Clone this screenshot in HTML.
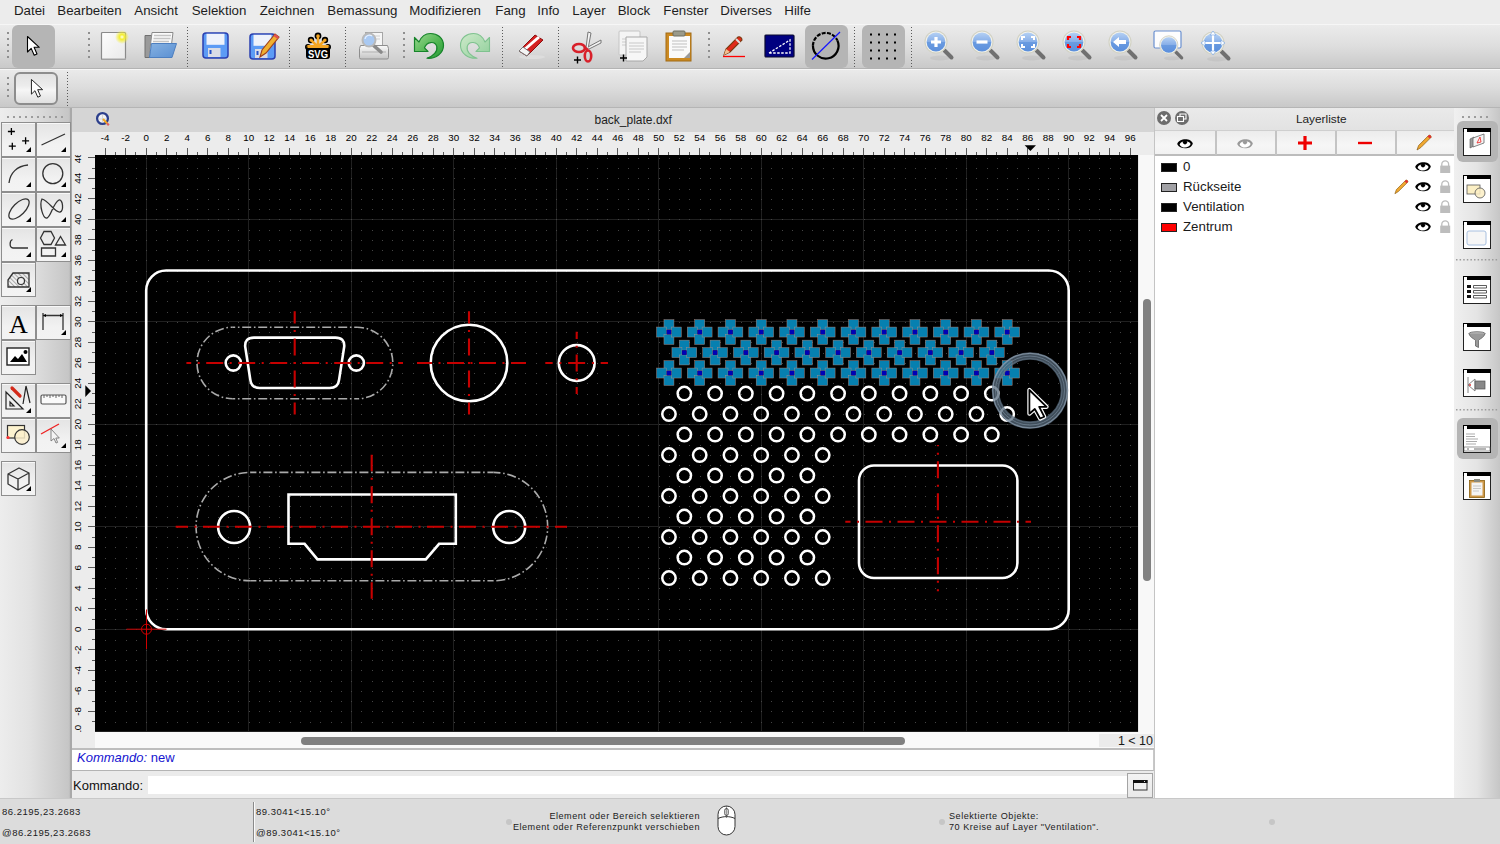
<!DOCTYPE html><html><head><meta charset="utf-8"><title>LibreCAD</title><style>
*{box-sizing:border-box}
body{margin:0;width:1500px;height:844px;position:relative;overflow:hidden;background:#ececec;font-family:"Liberation Sans",sans-serif;color:#222}
.a{position:absolute}
.mn{position:absolute;top:3px;font-size:13.3px;color:#1d1d1d;white-space:nowrap;line-height:16px}
.dsep{position:absolute;width:1px;background:repeating-linear-gradient(#5a5a5a 0 1.2px,transparent 1.2px 3px)}
.hdl{position:absolute;width:2px;background:repeating-linear-gradient(#8f8f8f 0 2px,transparent 2px 6px)}
.lb{position:absolute;background:linear-gradient(#e4e4e4,#f2f2f2 65%,#f3f3f3);border:1px solid #8e8e8e;box-shadow:inset 0 1px 0 #f8f8f8}
.tri{position:absolute;width:0;height:0;border-left:5px solid transparent;border-bottom:5px solid #000}
svg{position:absolute;overflow:visible}
.st{font-size:9.5px;letter-spacing:.5px;color:#1a1a1a;white-space:nowrap;line-height:11px}
.rt{font-size:9.8px;fill:#000;font-family:"Liberation Sans",sans-serif}
</style></head><body>
<div class="a" style="left:0;top:0;width:1500px;height:24px;background:#ececec"></div>
<span class="mn" style="left:14px">Datei</span>
<span class="mn" style="left:57.3px">Bearbeiten</span>
<span class="mn" style="left:134.3px">Ansicht</span>
<span class="mn" style="left:191.7px">Selektion</span>
<span class="mn" style="left:259.7px">Zeichnen</span>
<span class="mn" style="left:327.3px">Bemassung</span>
<span class="mn" style="left:409.3px">Modifizieren</span>
<span class="mn" style="left:495.3px">Fang</span>
<span class="mn" style="left:537.3px">Info</span>
<span class="mn" style="left:572.3px">Layer</span>
<span class="mn" style="left:617.7px">Block</span>
<span class="mn" style="left:663.3px">Fenster</span>
<span class="mn" style="left:720.3px">Diverses</span>
<span class="mn" style="left:784.3px">Hilfe</span>
<div class="a" style="left:0;top:24px;width:1500px;height:45px;background:linear-gradient(#f6f6f6 0 1px,#ebebeb 1px,#dedede 50%,#c9c9c9);border-bottom:1px solid #b3b3b3"></div>
<div class="a" style="left:0;top:69px;width:1500px;height:39px;background:linear-gradient(#f6f6f6 0 1px,#eaeaea 1px,#dcdcdc 50%,#c8c8c8);border-bottom:1px solid #b5b5b5"></div>
<div class="hdl" style="left:7px;top:32px;height:26px"></div>
<div class="a" style="left:12px;top:25px;width:43px;height:43px;border-radius:6px;background:#b5b5b5"></div>
<svg style="left:26px;top:35px" width="16" height="22"><path transform="scale(1.0)" d="M1.5 1.5 L1.5 17 L5.2 13.4 L8.2 20.2 L11 19 L8.1 12.3 L13.3 12.3 Z" fill="#fff" stroke="#000" stroke-width="1.1" stroke-linejoin="round"/></svg>
<div class="hdl" style="left:88px;top:32px;height:26px"></div>
<div class="dsep" style="left:187px;top:26.5px;height:41px"></div>
<div class="dsep" style="left:289px;top:26.5px;height:41px"></div>
<div class="dsep" style="left:345px;top:26.5px;height:41px"></div>
<div class="hdl" style="left:403px;top:32px;height:26px"></div>
<div class="dsep" style="left:502px;top:26.5px;height:41px"></div>
<div class="dsep" style="left:558px;top:26.5px;height:41px"></div>
<div class="hdl" style="left:708px;top:32px;height:26px"></div>
<div class="dsep" style="left:854px;top:26.5px;height:41px"></div>
<div class="dsep" style="left:911px;top:26.5px;height:41px"></div>
<svg style="left:100px;top:30px" width="30" height="32"><defs><radialGradient id="glow"><stop offset="0" stop-color="#fffff0"/><stop offset=".35" stop-color="#f4ee30"/><stop offset="1" stop-color="#f4ee30" stop-opacity="0"/></radialGradient><linearGradient id="pg" x1="0" y1="0" x2="1" y2="1"><stop offset="0" stop-color="#fdfdfd"/><stop offset="1" stop-color="#e9e9e9"/></linearGradient></defs>
<rect x="1.5" y="2.5" width="24" height="27" rx="1" fill="url(#pg)" stroke="#8a8a8a" stroke-width="1.2"/><rect x="2" y="28" width="24" height="2" fill="#b0b0b0" opacity=".6"/>
<circle cx="22" cy="7" r="7" fill="url(#glow)"/></svg>
<svg style="left:143px;top:31px" width="34" height="30"><defs><linearGradient id="fg" x1="0" y1="0" x2="1" y2="1"><stop offset="0" stop-color="#86b2e2"/><stop offset="1" stop-color="#5a8fd2"/></linearGradient></defs><path d="M2 4.5 h8 l1.5 2 v20 h-9.5z" fill="#9a9a9a" stroke="#707070" stroke-width="1"/>
<path d="M9 1.5 h21 l-2.5 20 h-21z" fill="#fafafa" stroke="#8a8a8a" stroke-width="1"/><path d="M11 4.5h17M10.5 7.5h17M10 10.5h16" stroke="#c4c4c4" stroke-width="1.6"/>
<path d="M8.5 12.5 h25 l-4.5 14 h-22.5z" fill="url(#fg)" stroke="#4d7fc0" stroke-width="1"/></svg>
<svg style="left:202px;top:32px" width="28" height="28"><rect x="1" y="1" width="25" height="25" rx="3" fill="#5c9bf5" stroke="#2a3fb0" stroke-width="1.5"/>
<rect x="4.5" y="1.8" width="18" height="11" fill="#eef2fb"/><rect x="6" y="16" width="12.5" height="9" fill="#d9dce6"/><rect x="7.5" y="18" width="2" height="4" fill="#2550c8"/></svg>
<svg style="left:249px;top:32.5px" width="28" height="28"><rect x="1" y="1" width="25" height="25" rx="3" fill="#5c9bf5" stroke="#2a3fb0" stroke-width="1.5"/>
<rect x="4.5" y="1.8" width="18" height="11" fill="#eef2fb"/><rect x="6" y="16" width="12.5" height="9" fill="#d9dce6"/><rect x="7.5" y="18" width="2" height="4" fill="#2550c8"/></svg>
<svg style="left:257px;top:31px" width="22" height="28"><path d="M3 26 L5 19 L18 3 L22 6 L9 22 Z" fill="#f0b030" stroke="#a0401a" stroke-width="1.1"/><path d="M18 3 L22 6 L20.5 8 L16.5 5z" fill="#e05050"/></svg>
<svg style="left:304px;top:31px" width="30" height="30"><g fill="#f5a623" stroke="#000" stroke-width="1.6"><circle cx="14" cy="5" r="2.6"/><circle cx="7" cy="9" r="2.4"/><circle cx="21" cy="9" r="2.4"/><circle cx="4" cy="16" r="2.2"/><circle cx="24" cy="16" r="2.2"/></g>
<path d="M14 5 L14 16 M7 9 L14 16 M21 9 L14 16" stroke="#f5a623" stroke-width="2.5"/>
<rect x="2" y="15" width="24" height="13" rx="3" fill="#000"/><rect x="3.5" y="14" width="21" height="3" fill="#f5a623"/>
<text x="14" y="26.6" font-family="Liberation Sans" font-weight="bold" font-size="11" fill="#fff" text-anchor="middle" textLength="20" lengthAdjust="spacingAndGlyphs">SVG</text></svg>
<svg style="left:359px;top:31px" width="32" height="30"><defs><linearGradient id="prg" x1="0" y1="0" x2="0" y2="1"><stop offset="0" stop-color="#fafafa"/><stop offset="1" stop-color="#c4c4c4"/></linearGradient></defs>
<rect x="6.5" y="1.5" width="17" height="14" fill="#f6f6f6" stroke="#a6a6a6"/><path d="M9 5h12M9 8h12" stroke="#cfcfcf"/>
<path d="M1.5 14.5 h27 l1 3 v9 a1.5 1.5 0 0 1 -1.5 1.5 h-26 a1.5 1.5 0 0 1 -1.5 -1.5 v-9z" fill="url(#prg)" stroke="#8e8e8e" stroke-width="1"/><path d="M3 21 h24" stroke="#b0b0b0"/>
<path d="M14 14 L22 21" stroke="#8a8a8a" stroke-width="3.6" stroke-linecap="round"/><circle cx="10" cy="9" r="6.5" fill="#a9c9f2" stroke="#b9b9b9" stroke-width="2"/><path d="M6 8 a4.5 4.5 0 0 1 7 -3" stroke="#e6f0ff" stroke-width="1.2" fill="none"/></svg>
<svg style="left:413px;top:32px" width="33" height="28"><defs><linearGradient id="ug" x1="0" y1="0" x2="1" y2="1"><stop offset="0" stop-color="#9ad890"/><stop offset=".6" stop-color="#4cb44e"/><stop offset="1" stop-color="#2a9a3a"/></linearGradient></defs><path d="M1.5 5.5 L1.5 19.5 L15 19.5 L11.5 15.8 C13.5 9.5 22 8.5 23.8 14.5 C24.8 19.5 20.5 24 14 26.2 C23 27 30.5 21 30.5 13.5 C30.5 5.5 24 1.5 17.5 1.5 C12.5 1.5 8.5 4 6 10 Z" fill="url(#ug)" stroke="#17842a" stroke-width="1.2" stroke-linejoin="round"/></svg>
<svg style="left:459px;top:32px" width="33" height="28"><defs><linearGradient id="rg" x1="1" y1="0" x2="0" y2="1"><stop offset="0" stop-color="#cfeacb"/><stop offset="1" stop-color="#8fcf9a"/></linearGradient></defs><g transform="translate(32 0) scale(-1 1)"><path d="M1.5 5.5 L1.5 19.5 L15 19.5 L11.5 15.8 C13.5 9.5 22 8.5 23.8 14.5 C24.8 19.5 20.5 24 14 26.2 C23 27 30.5 21 30.5 13.5 C30.5 5.5 24 1.5 17.5 1.5 C12.5 1.5 8.5 4 6 10 Z" fill="url(#rg)" stroke="#7fc28f" stroke-width="1.1" stroke-linejoin="round"/></g></svg>
<svg style="left:516px;top:31px" width="32" height="30"><ellipse cx="16" cy="26" rx="13" ry="2" fill="#ddd"/><path d="M3 20 L19 4 L27 9 L11 25 Z" fill="#d42020" stroke="#8a1010" stroke-width="1"/><path d="M7 18 L22 5 L24 7 L9 20Z" fill="#fff"/><path d="M3 20 L7 16 L14 21 L11 25 Z" fill="#f4f4f4" stroke="#777" stroke-width="1"/></svg>
<svg style="left:571px;top:29px" width="34" height="34"><path d="M15 19 L17 3 L20 4 L17 20" fill="#f4f4f4" stroke="#777" stroke-width="1"/><path d="M17 18 L30 11 L30 14 L18 20" fill="#f4f4f4" stroke="#777" stroke-width="1"/>
<ellipse cx="8" cy="19" rx="6" ry="4" fill="none" stroke="#d8202a" stroke-width="2.6"/><ellipse cx="17" cy="27" rx="3.2" ry="5.5" fill="none" stroke="#d8202a" stroke-width="2.6"/><path d="M13 18 L17 21" stroke="#d8202a" stroke-width="2.6"/>
<path d="M3 31h7M6.5 27.5v7" stroke="#000" stroke-width="1.4"/></svg>
<svg style="left:617px;top:29px" width="34" height="34"><rect x="2" y="2" width="21" height="24" rx="1" fill="#f4f4f4" stroke="#c4c4c4"/><path d="M5 10h13M5 13h13M5 16h13" stroke="#ccc"/>
<path d="M9 8 h21 v20 l-4 4 h-17z" fill="#f6f6f6" stroke="#a8a8a8" stroke-width="1"/><path d="M12 14h15M12 17h15M12 20h15M12 23h12" stroke="#c8c8c8" stroke-width="1.1"/><path d="M3 29h7M6.5 25.5v7" stroke="#000" stroke-width="1.4"/></svg>
<svg style="left:665px;top:29px" width="30" height="34"><rect x="1" y="4" width="25" height="28" fill="#cc8a22" stroke="#a16a14"/><rect x="4" y="7" width="21" height="22" fill="#fafafa"/><rect x="8" y="2" width="12" height="5" rx="1" fill="#9a9a8a" stroke="#6f6f60"/><path d="M7 12h15M7 15h15M7 18h15M7 21h12" stroke="#bfbfbf"/><path d="M19 29 l6 -6 v6z" fill="#9a9a9a"/></svg>
<svg style="left:721px;top:34.5px" width="28" height="26"><path d="M3 20 L5 14 L17 2 C19 1 21 3 21 5 L9 17 Z" fill="#e02a1a" stroke="#7a3a10" stroke-width="1.1"/><path d="M15 4 L19 8" stroke="#ddd" stroke-width="2"/><path d="M3 20 L5 14 L9 17z" fill="#f4c090"/><path d="M2 21.5 h22" stroke="#f00" stroke-width="1.3"/></svg>
<svg style="left:764px;top:34px" width="32" height="25"><rect x="1" y="1" width="29" height="22" rx="1" fill="#000080" stroke="#0b0b30" stroke-width="1.2"/><path d="M5 19 L26 6 L26 19 Z" fill="none" stroke="#fff" stroke-width="1.3" stroke-dasharray="2.5 1.5"/></svg>
<div class="a" style="left:805px;top:25px;width:43px;height:43px;border-radius:6px;background:#b5b5b5"></div>
<svg style="left:810px;top:30px" width="34" height="34"><path d="M27.35 10.35 A12.8 12.8 0 1 1 2.95 15.75" fill="none" stroke="#000" stroke-width="2.2"/><path d="M2.95 15.75 A12.8 12.8 0 0 1 27.35 10.35" fill="none" stroke="#000" stroke-width="2.2" stroke-dasharray="4 1.3"/><path d="M2 29.5 L30 2" stroke="#1515ff" stroke-width="1.2"/></svg>
<div class="a" style="left:862px;top:25px;width:43px;height:43px;border-radius:6px;background:#b5b5b5"></div>
<svg style="left:0;top:0" width="1" height="1"><g fill="#000"><rect x="870" y="33.5" width="2" height="2"/><rect x="870" y="41.5" width="2" height="2"/><rect x="870" y="49.5" width="2" height="2"/><rect x="870" y="57.5" width="2" height="2"/><rect x="878" y="33.5" width="2" height="2"/><rect x="878" y="41.5" width="2" height="2"/><rect x="878" y="49.5" width="2" height="2"/><rect x="878" y="57.5" width="2" height="2"/><rect x="886" y="33.5" width="2" height="2"/><rect x="886" y="41.5" width="2" height="2"/><rect x="886" y="49.5" width="2" height="2"/><rect x="886" y="57.5" width="2" height="2"/><rect x="894" y="33.5" width="2" height="2"/><rect x="894" y="41.5" width="2" height="2"/><rect x="894" y="49.5" width="2" height="2"/><rect x="894" y="57.5" width="2" height="2"/></g></svg>
<svg style="left:923px;top:30px" width="36" height="36"><g transform="scale(1.0)"><defs><linearGradient id="lg936" x1="0" y1="0" x2="0" y2="1"><stop offset="0" stop-color="#b4d0f4"/><stop offset=".5" stop-color="#86aee8"/><stop offset=".52" stop-color="#6a9be0"/><stop offset="1" stop-color="#5b8fdc"/></linearGradient></defs><ellipse cx="17" cy="28" rx="10" ry="2.5" fill="#000" opacity=".05"/><path d="M21.5 20.5 L28.5 27.5" stroke="#707070" stroke-width="4" stroke-linecap="round"/>
<circle cx="13" cy="12" r="11" fill="#f2f2ec" stroke="#d2d2c4" stroke-width="1.1"/><circle cx="13" cy="12" r="9.4" fill="url(#lg936)"/><path d="M13 7 v10 M8 12 h10" stroke="#fff" stroke-width="3.2"/></g></svg>
<svg style="left:969px;top:30px" width="36" height="36"><g transform="scale(1.0)"><defs><linearGradient id="lg982" x1="0" y1="0" x2="0" y2="1"><stop offset="0" stop-color="#b4d0f4"/><stop offset=".5" stop-color="#86aee8"/><stop offset=".52" stop-color="#6a9be0"/><stop offset="1" stop-color="#5b8fdc"/></linearGradient></defs><ellipse cx="17" cy="28" rx="10" ry="2.5" fill="#000" opacity=".05"/><path d="M21.5 20.5 L28.5 27.5" stroke="#707070" stroke-width="4" stroke-linecap="round"/>
<circle cx="13" cy="12" r="11" fill="#f2f2ec" stroke="#d2d2c4" stroke-width="1.1"/><circle cx="13" cy="12" r="9.4" fill="url(#lg982)"/><path d="M7.5 12 h11" stroke="#fff" stroke-width="3.2"/></g></svg>
<svg style="left:1015px;top:30px" width="36" height="36"><g transform="scale(1.0)"><defs><linearGradient id="lg1028" x1="0" y1="0" x2="0" y2="1"><stop offset="0" stop-color="#b4d0f4"/><stop offset=".5" stop-color="#86aee8"/><stop offset=".52" stop-color="#6a9be0"/><stop offset="1" stop-color="#5b8fdc"/></linearGradient></defs><ellipse cx="17" cy="28" rx="10" ry="2.5" fill="#000" opacity=".05"/><path d="M21.5 20.5 L28.5 27.5" stroke="#707070" stroke-width="4" stroke-linecap="round"/>
<circle cx="13" cy="12" r="11" fill="#f2f2ec" stroke="#d2d2c4" stroke-width="1.1"/><circle cx="13" cy="12" r="9.4" fill="url(#lg1028)"/><path d="M7 10v-3h3M16 7h3v3M19 14v3h-3M10 17h-3v-3" stroke="#fff" stroke-width="2" fill="none"/></g></svg>
<svg style="left:1061px;top:30px" width="36" height="36"><g transform="scale(1.0)"><defs><linearGradient id="lg1074" x1="0" y1="0" x2="0" y2="1"><stop offset="0" stop-color="#b4d0f4"/><stop offset=".5" stop-color="#86aee8"/><stop offset=".52" stop-color="#6a9be0"/><stop offset="1" stop-color="#5b8fdc"/></linearGradient></defs><ellipse cx="17" cy="28" rx="10" ry="2.5" fill="#000" opacity=".05"/><path d="M21.5 20.5 L28.5 27.5" stroke="#707070" stroke-width="4" stroke-linecap="round"/>
<circle cx="13" cy="12" r="11" fill="#f2f2ec" stroke="#d2d2c4" stroke-width="1.1"/><circle cx="13" cy="12" r="9.4" fill="url(#lg1074)"/><path d="M7 10v-3h3M16 7h3v3M19 14v3h-3M10 17h-3v-3" stroke="#f00" stroke-width="2.2" fill="none"/></g></svg>
<svg style="left:1107px;top:30px" width="36" height="36"><g transform="scale(1.0)"><defs><linearGradient id="lg1120" x1="0" y1="0" x2="0" y2="1"><stop offset="0" stop-color="#b4d0f4"/><stop offset=".5" stop-color="#86aee8"/><stop offset=".52" stop-color="#6a9be0"/><stop offset="1" stop-color="#5b8fdc"/></linearGradient></defs><ellipse cx="17" cy="28" rx="10" ry="2.5" fill="#000" opacity=".05"/><path d="M21.5 20.5 L28.5 27.5" stroke="#707070" stroke-width="4" stroke-linecap="round"/>
<circle cx="13" cy="12" r="11" fill="#f2f2ec" stroke="#d2d2c4" stroke-width="1.1"/><circle cx="13" cy="12" r="9.4" fill="url(#lg1120)"/><path d="M6 12 L12 7 v3 h7 v4 h-7 v3z" fill="#fff"/></g></svg>
<svg style="left:1153px;top:30px" width="30" height="20"><rect x="1" y="1" width="27" height="17" rx="1.5" fill="#fdfdfd" stroke="#6a90d0" stroke-width="1.2"/></svg>
<svg style="left:1157.71px;top:34.54px" width="36" height="36"><g transform="scale(0.83)"><defs><linearGradient id="lg1168" x1="0" y1="0" x2="0" y2="1"><stop offset="0" stop-color="#b4d0f4"/><stop offset=".5" stop-color="#86aee8"/><stop offset=".52" stop-color="#6a9be0"/><stop offset="1" stop-color="#5b8fdc"/></linearGradient></defs><ellipse cx="17" cy="28" rx="10" ry="2.5" fill="#000" opacity=".05"/><path d="M21.5 20.5 L28.5 27.5" stroke="#707070" stroke-width="4" stroke-linecap="round"/>
<circle cx="13" cy="12" r="11" fill="#f2f2ec" stroke="#d2d2c4" stroke-width="1.1"/><circle cx="13" cy="12" r="9.4" fill="url(#lg1168)"/></g></svg>
<svg style="left:1200px;top:31px" width="36" height="36"><g transform="scale(1.0)"><defs><linearGradient id="lg1213" x1="0" y1="0" x2="0" y2="1"><stop offset="0" stop-color="#b4d0f4"/><stop offset=".5" stop-color="#86aee8"/><stop offset=".52" stop-color="#6a9be0"/><stop offset="1" stop-color="#5b8fdc"/></linearGradient></defs><ellipse cx="17" cy="28" rx="10" ry="2.5" fill="#000" opacity=".05"/><path d="M21.5 20.5 L28.5 27.5" stroke="#707070" stroke-width="4" stroke-linecap="round"/>
<circle cx="13" cy="12" r="11" fill="#f2f2ec" stroke="#d2d2c4" stroke-width="1.1"/><circle cx="13" cy="12" r="9.4" fill="url(#lg1213)"/><path d="M13 2 v20 M3 12 h20" stroke="#fff" stroke-width="2.2"/><path d="M13 0 l-3 4 h6z M13 24 l-3 -4 h6z M1 12 l4 -3 v6z M25 12 l-4 -3 v6z" fill="#fff" stroke="#6b9de0" stroke-width=".6"/></g></svg>
<div class="hdl" style="left:7px;top:77px;height:24px"></div>
<div class="a" style="left:14px;top:72px;width:44px;height:33px;border-radius:6px;border:2px solid #8d8d8d;background:linear-gradient(#e2e2e2,#ececec 40%,#f6f6f6 55%,#e0e0e0)"></div>
<svg style="left:30px;top:78px" width="16" height="22"><path transform="scale(0.95)" d="M1.5 1.5 L1.5 17 L5.2 13.4 L8.2 20.2 L11 19 L8.1 12.3 L13.3 12.3 Z" fill="#fff" stroke="#1a1a1a" stroke-width="1.0" stroke-linejoin="round"/></svg>
<div class="dsep" style="left:67px;top:71.5px;height:35px"></div>
<div class="a" style="left:0;top:108px;width:72px;height:690px;background:linear-gradient(90deg,#ededed,#e2e2e2 40%,#c6c6c6 95%,#b0b0b0)"></div>
<div class="a" style="left:70px;top:108px;width:2px;height:690px;background:#a9a9a9"></div>
<svg style="left:0;top:0" width="1" height="1"><g fill="#9c9c9c"><rect x="7" y="116" width="2" height="2"/><rect x="13" y="116" width="2" height="2"/><rect x="19" y="116" width="2" height="2"/><rect x="25" y="116" width="2" height="2"/><rect x="31" y="116" width="2" height="2"/><rect x="37" y="116" width="2" height="2"/><rect x="43" y="116" width="2" height="2"/><rect x="49" y="116" width="2" height="2"/><rect x="55" y="116" width="2" height="2"/><rect x="61" y="116" width="2" height="2"/></g></svg>
<div class="lb" style="left:1px;top:122px;width:35px;height:35px"></div>
<svg style="left:1px;top:121px" width="36" height="35"><path d="M6.9 10.5h7M10.4 7v7M21.1 19.8h7M24.6 16.3v7M7.8 25.2h7M11.3 21.7v7" stroke="#000" stroke-width="1.3"/></svg>
<div class="tri" style="left:26px;top:147px"></div>
<div class="lb" style="left:36px;top:122px;width:35px;height:35px"></div>
<svg style="left:35px;top:121px" width="36" height="35"><path d="M6.5 24 L30 13" stroke="#333" fill="none" stroke-width="1.3"/></svg>
<div class="tri" style="left:61px;top:147px"></div>
<div class="lb" style="left:1px;top:157px;width:35px;height:35px"></div>
<svg style="left:1px;top:156px" width="36" height="35"><path d="M8 27 C9 17 16 10 27 9" stroke="#333" fill="none" stroke-width="1.3"/></svg>
<div class="tri" style="left:26px;top:182px"></div>
<div class="lb" style="left:36px;top:157px;width:35px;height:35px"></div>
<svg style="left:35px;top:156px" width="36" height="35"><circle cx="17.8" cy="17.6" r="10" stroke="#333" fill="none" stroke-width="1.3"/></svg>
<div class="tri" style="left:61px;top:182px"></div>
<div class="lb" style="left:1px;top:192px;width:35px;height:35px"></div>
<svg style="left:1px;top:191px" width="36" height="35"><ellipse cx="18" cy="18" rx="6" ry="13" transform="rotate(45 18 18)" stroke="#333" fill="none" stroke-width="1.3"/></svg>
<div class="tri" style="left:26px;top:217px"></div>
<div class="lb" style="left:36px;top:192px;width:35px;height:35px"></div>
<svg style="left:35px;top:191px" width="36" height="35"><path d="M7 8 C4 14 8 28 12 27 C16 26 18 12 24 9 C28 8 29 20 25 21 C20 22 14 10 7 8Z" stroke="#333" fill="none" stroke-width="1.3"/></svg>
<div class="tri" style="left:61px;top:217px"></div>
<div class="lb" style="left:1px;top:227px;width:35px;height:35px"></div>
<svg style="left:1px;top:226px" width="36" height="35"><path d="M11.5 13.5 C8.5 14.5 8 21.5 12 22 L27 22" stroke="#333" fill="none" stroke-width="1.3"/></svg>
<div class="tri" style="left:26px;top:252px"></div>
<div class="lb" style="left:36px;top:227px;width:35px;height:35px"></div>
<svg style="left:35px;top:226px" width="36" height="35"><path d="M5.5 12 L9 5.5 L16 5.5 L19.5 12 L16 18.5 L9 18.5Z M20.5 19 L25.5 10.5 L30.5 19Z M6.5 22 h14 v8 h-14z" stroke="#333" fill="none" stroke-width="1.3"/></svg>
<div class="tri" style="left:61px;top:252px"></div>
<div class="lb" style="left:1px;top:262px;width:35px;height:35px"></div>
<svg style="left:1px;top:261px" width="36" height="35"><defs><pattern id="ht" width="3" height="3" patternUnits="userSpaceOnUse" patternTransform="rotate(-45)"><path d="M0 0v3" stroke="#555" stroke-width="0.9"/></pattern></defs><path d="M7 26 L7 19 L12 12 L28 12 L28 26Z" fill="url(#ht)" stroke="#333" stroke-width="1.3"/><circle cx="20" cy="20" r="3.5" fill="#f0f0f0" stroke="#333" stroke-width="1.2"/></svg>
<div class="tri" style="left:26px;top:287px"></div>
<div class="lb" style="left:1px;top:305px;width:35px;height:35px"></div>
<svg style="left:1px;top:304px" width="36" height="35"><text x="17.5" y="28.5" font-family="Liberation Serif" font-size="26" text-anchor="middle" fill="#000">A</text></svg>
<div class="lb" style="left:36px;top:305px;width:35px;height:35px"></div>
<svg style="left:35px;top:304px" width="36" height="35"><path d="M8 9v17M28 9v17M8 11.5h20" stroke="#333" fill="none" stroke-width="1.3"/><path d="M8 11.5l3-1.5v3zM28 11.5l-3-1.5v3z" fill="#000"/></svg>
<div class="tri" style="left:61px;top:330px"></div>
<div class="lb" style="left:1px;top:340px;width:35px;height:35px"></div>
<svg style="left:1px;top:339px" width="36" height="35"><rect x="6" y="9" width="22" height="17" fill="#fff" stroke="#222" stroke-width="1.4"/><path d="M9 23 L14 17 L17 20 L21 15 L26 23Z" fill="#000"/><circle cx="24.5" cy="13" r="2" fill="#000"/></svg>
<div class="lb" style="left:1px;top:383px;width:35px;height:35px"></div>
<svg style="left:1px;top:382px" width="36" height="35"><path d="M5 10 L5 27 L22 27Z M9 20 L9 24 L13 24Z" fill="none" stroke="#222" stroke-width="1.2"/><path d="M11 6 L19 14" stroke="#d42a1a" stroke-width="3.2" stroke-linecap="round"/><path d="M25 4 L22 22 M25 4 L29 21" stroke="#222" stroke-width="1.2"/></svg>
<div class="tri" style="left:26px;top:408px"></div>
<div class="lb" style="left:36px;top:383px;width:35px;height:35px"></div>
<svg style="left:35px;top:382px" width="36" height="35"><rect x="6" y="13" width="25" height="9" rx="1.5" fill="#fafafa" stroke="#555" stroke-width="1.2"/><path d="M9 13v3M12 13v2M15 13v3M18 13v2M21 13v3M24 13v2M27 13v3" stroke="#555" stroke-width=".9"/></svg>
<div class="lb" style="left:1px;top:418px;width:35px;height:35px"></div>
<svg style="left:1px;top:417px" width="36" height="35"><rect x="6.5" y="8.5" width="17" height="12.5" fill="#fdf3cf" stroke="#333" stroke-width="1.2"/><circle cx="21" cy="20" r="7.3" fill="#fbefcb" stroke="#333" stroke-width="1.2" fill-opacity=".85"/><circle cx="7" cy="20.5" r="1.6" fill="#f33"/></svg>
<div class="lb" style="left:36px;top:418px;width:35px;height:35px"></div>
<svg style="left:35px;top:417px" width="36" height="35"><path d="M6 17 L24 7" stroke="#ee2222" stroke-width="1.4"/><path d="M16 12 L16 24 L19 21.5 L21 26 L22.6 25.4 L20.8 21 L24.3 21Z" fill="#f4f4f4" stroke="#777" stroke-width=".9"/></svg>
<div class="tri" style="left:61px;top:443px"></div>
<div class="lb" style="left:1px;top:461px;width:35px;height:35px"></div>
<svg style="left:1px;top:460px" width="36" height="35"><path d="M7 14 L18 8 L28 13 L17 19Z M7 14 L7 24 L17 30 L17 19 M28 13 L28 24 L17 30" fill="none" stroke="#333" stroke-width="1.3" stroke-linejoin="round"/></svg>
<div class="tri" style="left:26px;top:486px"></div>
<div class="a" style="left:72px;top:108px;width:1082px;height:23.5px;background:#d5d5d5"></div>
<span class="a" style="left:594.5px;top:112.5px;font-size:12px;color:#1e1e1e;white-space:nowrap">back_plate.dxf</span>
<svg style="left:94.6px;top:111.2px" width="16" height="16"><circle cx="7.5" cy="7.5" r="5.4" fill="#f2f2f4" stroke="#2c3f8c" stroke-width="2.3"/><path d="M4 8 h7 M7.5 4 v7" stroke="#c9c9cc" stroke-width=".7"/><path d="M8 8 L12.3 12.6" stroke="#f0a820" stroke-width="2.1"/><path d="M12 12.3 l1.8 1.9" stroke="#e06060" stroke-width="2.1"/></svg>
<div class="a" style="left:72px;top:131.5px;width:1082px;height:23.5px;background:#ececec"></div>
<div class="a" style="left:72px;top:155px;width:23px;height:593px;background:#ececec"></div>
<svg style="left:0;top:0" width="1" height="1"><path d="M105.5 148V155M115.5 152V155M125.5 148V155M135.5 152V155M146.5 148V155M156.5 152V155M166.5 148V155M176.5 152V155M187.5 148V155M197.5 152V155M207.5 148V155M217.5 152V155M228.5 148V155M238.5 152V155M248.5 148V155M258.5 152V155M269.5 148V155M279.5 152V155M289.5 148V155M299.5 152V155M310.5 148V155M320.5 152V155M330.5 148V155M340.5 152V155M351.5 148V155M361.5 152V155M371.5 148V155M381.5 152V155M392.5 148V155M402.5 152V155M412.5 148V155M422.5 152V155M433.5 148V155M443.5 152V155M453.5 148V155M463.5 152V155M474.5 148V155M484.5 152V155M494.5 148V155M504.5 152V155M515.5 148V155M525.5 152V155M535.5 148V155M545.5 152V155M556.5 148V155M566.5 152V155M576.5 148V155M586.5 152V155M597.5 148V155M607.5 152V155M617.5 148V155M627.5 152V155M638.5 148V155M648.5 152V155M658.5 148V155M668.5 152V155M679.5 148V155M689.5 152V155M699.5 148V155M709.5 152V155M720.5 148V155M730.5 152V155M740.5 148V155M750.5 152V155M761.5 148V155M771.5 152V155M781.5 148V155M791.5 152V155M802.5 148V155M812.5 152V155M822.5 148V155M832.5 152V155M843.5 148V155M853.5 152V155M863.5 148V155M873.5 152V155M884.5 148V155M894.5 152V155M904.5 148V155M914.5 152V155M925.5 148V155M935.5 152V155M945.5 148V155M955.5 152V155M966.5 148V155M976.5 152V155M986.5 148V155M996.5 152V155M1007.5 148V155M1017.5 152V155M1027.5 148V155M1037.5 152V155M1048.5 148V155M1058.5 152V155M1068.5 148V155M1078.5 152V155M1089.5 148V155M1099.5 152V155M1109.5 148V155M1119.5 152V155M1130.5 148V155" stroke="#5a5a5a" stroke-width="1"/><text class="rt" x="105.2" y="141" text-anchor="middle">-4</text><text class="rt" x="125.7" y="141" text-anchor="middle">-2</text><text class="rt" x="146.2" y="141" text-anchor="middle">0</text><text class="rt" x="166.7" y="141" text-anchor="middle">2</text><text class="rt" x="187.2" y="141" text-anchor="middle">4</text><text class="rt" x="207.7" y="141" text-anchor="middle">6</text><text class="rt" x="228.2" y="141" text-anchor="middle">8</text><text class="rt" x="248.7" y="141" text-anchor="middle">10</text><text class="rt" x="269.2" y="141" text-anchor="middle">12</text><text class="rt" x="289.7" y="141" text-anchor="middle">14</text><text class="rt" x="310.2" y="141" text-anchor="middle">16</text><text class="rt" x="330.7" y="141" text-anchor="middle">18</text><text class="rt" x="351.2" y="141" text-anchor="middle">20</text><text class="rt" x="371.7" y="141" text-anchor="middle">22</text><text class="rt" x="392.2" y="141" text-anchor="middle">24</text><text class="rt" x="412.7" y="141" text-anchor="middle">26</text><text class="rt" x="433.2" y="141" text-anchor="middle">28</text><text class="rt" x="453.7" y="141" text-anchor="middle">30</text><text class="rt" x="474.2" y="141" text-anchor="middle">32</text><text class="rt" x="494.7" y="141" text-anchor="middle">34</text><text class="rt" x="515.2" y="141" text-anchor="middle">36</text><text class="rt" x="535.7" y="141" text-anchor="middle">38</text><text class="rt" x="556.2" y="141" text-anchor="middle">40</text><text class="rt" x="576.7" y="141" text-anchor="middle">42</text><text class="rt" x="597.2" y="141" text-anchor="middle">44</text><text class="rt" x="617.7" y="141" text-anchor="middle">46</text><text class="rt" x="638.2" y="141" text-anchor="middle">48</text><text class="rt" x="658.7" y="141" text-anchor="middle">50</text><text class="rt" x="679.2" y="141" text-anchor="middle">52</text><text class="rt" x="699.7" y="141" text-anchor="middle">54</text><text class="rt" x="720.2" y="141" text-anchor="middle">56</text><text class="rt" x="740.7" y="141" text-anchor="middle">58</text><text class="rt" x="761.2" y="141" text-anchor="middle">60</text><text class="rt" x="781.7" y="141" text-anchor="middle">62</text><text class="rt" x="802.2" y="141" text-anchor="middle">64</text><text class="rt" x="822.7" y="141" text-anchor="middle">66</text><text class="rt" x="843.2" y="141" text-anchor="middle">68</text><text class="rt" x="863.7" y="141" text-anchor="middle">70</text><text class="rt" x="884.2" y="141" text-anchor="middle">72</text><text class="rt" x="904.7" y="141" text-anchor="middle">74</text><text class="rt" x="925.2" y="141" text-anchor="middle">76</text><text class="rt" x="945.7" y="141" text-anchor="middle">78</text><text class="rt" x="966.2" y="141" text-anchor="middle">80</text><text class="rt" x="986.7" y="141" text-anchor="middle">82</text><text class="rt" x="1007.2" y="141" text-anchor="middle">84</text><text class="rt" x="1027.7" y="141" text-anchor="middle">86</text><text class="rt" x="1048.2" y="141" text-anchor="middle">88</text><text class="rt" x="1068.7" y="141" text-anchor="middle">90</text><text class="rt" x="1089.2" y="141" text-anchor="middle">92</text><text class="rt" x="1109.7" y="141" text-anchor="middle">94</text><text class="rt" x="1130.2" y="141" text-anchor="middle">96</text><path d="M1024.6 145.2 L1036 145.2 L1030.4 151Z" fill="#000"/></svg>
<svg style="left:72px;top:155px;overflow:hidden" width="23" height="577"><g transform="translate(-72 -155)"><path d="M92 721.5H95M88 711.5H95M92 701.5H95M88 690.5H95M92 680.5H95M88 670.5H95M92 660.5H95M88 649.5H95M92 639.5H95M88 629.5H95M92 619.5H95M88 608.5H95M92 598.5H95M88 588.5H95M92 578.5H95M88 567.5H95M92 557.5H95M88 547.5H95M92 537.5H95M88 526.5H95M92 516.5H95M88 506.5H95M92 496.5H95M88 485.5H95M92 475.5H95M88 465.5H95M92 455.5H95M88 444.5H95M92 434.5H95M88 424.5H95M92 414.5H95M88 403.5H95M92 393.5H95M88 383.5H95M92 373.5H95M88 362.5H95M92 352.5H95M88 342.5H95M92 332.5H95M88 321.5H95M92 311.5H95M88 301.5H95M92 291.5H95M88 280.5H95M92 270.5H95M88 260.5H95M92 250.5H95M88 239.5H95M92 229.5H95M88 219.5H95M92 209.5H95M88 198.5H95M92 188.5H95M88 178.5H95M92 168.5H95M88 157.5H95" stroke="#5a5a5a" stroke-width="1"/><text class="rt" x="0" y="0" text-anchor="middle" transform="translate(80.8 731.8) rotate(-90)">-10</text><text class="rt" x="0" y="0" text-anchor="middle" transform="translate(80.8 711.3) rotate(-90)">-8</text><text class="rt" x="0" y="0" text-anchor="middle" transform="translate(80.8 690.8) rotate(-90)">-6</text><text class="rt" x="0" y="0" text-anchor="middle" transform="translate(80.8 670.3) rotate(-90)">-4</text><text class="rt" x="0" y="0" text-anchor="middle" transform="translate(80.8 649.8) rotate(-90)">-2</text><text class="rt" x="0" y="0" text-anchor="middle" transform="translate(80.8 629.3) rotate(-90)">0</text><text class="rt" x="0" y="0" text-anchor="middle" transform="translate(80.8 608.8) rotate(-90)">2</text><text class="rt" x="0" y="0" text-anchor="middle" transform="translate(80.8 588.3) rotate(-90)">4</text><text class="rt" x="0" y="0" text-anchor="middle" transform="translate(80.8 567.8) rotate(-90)">6</text><text class="rt" x="0" y="0" text-anchor="middle" transform="translate(80.8 547.3) rotate(-90)">8</text><text class="rt" x="0" y="0" text-anchor="middle" transform="translate(80.8 526.8) rotate(-90)">10</text><text class="rt" x="0" y="0" text-anchor="middle" transform="translate(80.8 506.3) rotate(-90)">12</text><text class="rt" x="0" y="0" text-anchor="middle" transform="translate(80.8 485.8) rotate(-90)">14</text><text class="rt" x="0" y="0" text-anchor="middle" transform="translate(80.8 465.3) rotate(-90)">16</text><text class="rt" x="0" y="0" text-anchor="middle" transform="translate(80.8 444.8) rotate(-90)">18</text><text class="rt" x="0" y="0" text-anchor="middle" transform="translate(80.8 424.3) rotate(-90)">20</text><text class="rt" x="0" y="0" text-anchor="middle" transform="translate(80.8 403.8) rotate(-90)">22</text><text class="rt" x="0" y="0" text-anchor="middle" transform="translate(80.8 383.3) rotate(-90)">24</text><text class="rt" x="0" y="0" text-anchor="middle" transform="translate(80.8 362.8) rotate(-90)">26</text><text class="rt" x="0" y="0" text-anchor="middle" transform="translate(80.8 342.3) rotate(-90)">28</text><text class="rt" x="0" y="0" text-anchor="middle" transform="translate(80.8 321.8) rotate(-90)">30</text><text class="rt" x="0" y="0" text-anchor="middle" transform="translate(80.8 301.3) rotate(-90)">32</text><text class="rt" x="0" y="0" text-anchor="middle" transform="translate(80.8 280.8) rotate(-90)">34</text><text class="rt" x="0" y="0" text-anchor="middle" transform="translate(80.8 260.3) rotate(-90)">36</text><text class="rt" x="0" y="0" text-anchor="middle" transform="translate(80.8 239.8) rotate(-90)">38</text><text class="rt" x="0" y="0" text-anchor="middle" transform="translate(80.8 219.3) rotate(-90)">40</text><text class="rt" x="0" y="0" text-anchor="middle" transform="translate(80.8 198.8) rotate(-90)">42</text><text class="rt" x="0" y="0" text-anchor="middle" transform="translate(80.8 178.3) rotate(-90)">44</text><text class="rt" x="0" y="0" text-anchor="middle" transform="translate(80.8 157.8) rotate(-90)">46</text><path d="M85.3 385.2 L85.3 397 L91 391Z" fill="#000"/></g></svg>
<svg style="left:95px;top:155px;overflow:hidden" width="1043" height="577"><g transform="translate(-95 -155)"><rect x="95" y="155" width="1043" height="577" fill="#000"/><path d="M146.5 155V732M248.5 155V732M351.5 155V732M453.5 155V732M556.5 155V732M658.5 155V732M761.5 155V732M863.5 155V732M966.5 155V732M1068.5 155V732M95 731.5H1138M95 629.5H1138M95 526.5H1138M95 424.5H1138M95 321.5H1138M95 219.5H1138" stroke="#202020" stroke-width="1"/><path d="M105 732.5h1m9 0h1m10 0h1m9 0h1m9 0h1m9 0h1m10 0h1m9 0h1m9 0h1m9 0h1m10 0h1m9 0h1m9 0h1m9 0h1m10 0h1m9 0h1m9 0h1m9 0h1m10 0h1m9 0h1m9 0h1m9 0h1m10 0h1m9 0h1m9 0h1m9 0h1m10 0h1m9 0h1m9 0h1m9 0h1m10 0h1m9 0h1m9 0h1m9 0h1m10 0h1m9 0h1m9 0h1m9 0h1m10 0h1m9 0h1m9 0h1m9 0h1m10 0h1m9 0h1m9 0h1m9 0h1m10 0h1m9 0h1m9 0h1m9 0h1m10 0h1m9 0h1m9 0h1m9 0h1m10 0h1m9 0h1m9 0h1m9 0h1m10 0h1m9 0h1m9 0h1m9 0h1m10 0h1m9 0h1m9 0h1m9 0h1m10 0h1m9 0h1m9 0h1m9 0h1m10 0h1m9 0h1m9 0h1m9 0h1m10 0h1m9 0h1m9 0h1m9 0h1m10 0h1m9 0h1m9 0h1m9 0h1m10 0h1m9 0h1m9 0h1m9 0h1m10 0h1m9 0h1m9 0h1m9 0h1m10 0h1m9 0h1m9 0h1m9 0h1m10 0h1m9 0h1m9 0h1m9 0h1m10 0h1m9 0h1m9 0h1M105 722.5h1m9 0h1m10 0h1m9 0h1m9 0h1m9 0h1m10 0h1m9 0h1m9 0h1m9 0h1m10 0h1m9 0h1m9 0h1m9 0h1m10 0h1m9 0h1m9 0h1m9 0h1m10 0h1m9 0h1m9 0h1m9 0h1m10 0h1m9 0h1m9 0h1m9 0h1m10 0h1m9 0h1m9 0h1m9 0h1m10 0h1m9 0h1m9 0h1m9 0h1m10 0h1m9 0h1m9 0h1m9 0h1m10 0h1m9 0h1m9 0h1m9 0h1m10 0h1m9 0h1m9 0h1m9 0h1m10 0h1m9 0h1m9 0h1m9 0h1m10 0h1m9 0h1m9 0h1m9 0h1m10 0h1m9 0h1m9 0h1m9 0h1m10 0h1m9 0h1m9 0h1m9 0h1m10 0h1m9 0h1m9 0h1m9 0h1m10 0h1m9 0h1m9 0h1m9 0h1m10 0h1m9 0h1m9 0h1m9 0h1m10 0h1m9 0h1m9 0h1m9 0h1m10 0h1m9 0h1m9 0h1m9 0h1m10 0h1m9 0h1m9 0h1m9 0h1m10 0h1m9 0h1m9 0h1m9 0h1m10 0h1m9 0h1m9 0h1m9 0h1m10 0h1m9 0h1m9 0h1m9 0h1m10 0h1m9 0h1m9 0h1M105 711.5h1m9 0h1m10 0h1m9 0h1m9 0h1m9 0h1m10 0h1m9 0h1m9 0h1m9 0h1m10 0h1m9 0h1m9 0h1m9 0h1m10 0h1m9 0h1m9 0h1m9 0h1m10 0h1m9 0h1m9 0h1m9 0h1m10 0h1m9 0h1m9 0h1m9 0h1m10 0h1m9 0h1m9 0h1m9 0h1m10 0h1m9 0h1m9 0h1m9 0h1m10 0h1m9 0h1m9 0h1m9 0h1m10 0h1m9 0h1m9 0h1m9 0h1m10 0h1m9 0h1m9 0h1m9 0h1m10 0h1m9 0h1m9 0h1m9 0h1m10 0h1m9 0h1m9 0h1m9 0h1m10 0h1m9 0h1m9 0h1m9 0h1m10 0h1m9 0h1m9 0h1m9 0h1m10 0h1m9 0h1m9 0h1m9 0h1m10 0h1m9 0h1m9 0h1m9 0h1m10 0h1m9 0h1m9 0h1m9 0h1m10 0h1m9 0h1m9 0h1m9 0h1m10 0h1m9 0h1m9 0h1m9 0h1m10 0h1m9 0h1m9 0h1m9 0h1m10 0h1m9 0h1m9 0h1m9 0h1m10 0h1m9 0h1m9 0h1m9 0h1m10 0h1m9 0h1m9 0h1m9 0h1m10 0h1m9 0h1m9 0h1M105 701.5h1m9 0h1m10 0h1m9 0h1m9 0h1m9 0h1m10 0h1m9 0h1m9 0h1m9 0h1m10 0h1m9 0h1m9 0h1m9 0h1m10 0h1m9 0h1m9 0h1m9 0h1m10 0h1m9 0h1m9 0h1m9 0h1m10 0h1m9 0h1m9 0h1m9 0h1m10 0h1m9 0h1m9 0h1m9 0h1m10 0h1m9 0h1m9 0h1m9 0h1m10 0h1m9 0h1m9 0h1m9 0h1m10 0h1m9 0h1m9 0h1m9 0h1m10 0h1m9 0h1m9 0h1m9 0h1m10 0h1m9 0h1m9 0h1m9 0h1m10 0h1m9 0h1m9 0h1m9 0h1m10 0h1m9 0h1m9 0h1m9 0h1m10 0h1m9 0h1m9 0h1m9 0h1m10 0h1m9 0h1m9 0h1m9 0h1m10 0h1m9 0h1m9 0h1m9 0h1m10 0h1m9 0h1m9 0h1m9 0h1m10 0h1m9 0h1m9 0h1m9 0h1m10 0h1m9 0h1m9 0h1m9 0h1m10 0h1m9 0h1m9 0h1m9 0h1m10 0h1m9 0h1m9 0h1m9 0h1m10 0h1m9 0h1m9 0h1m9 0h1m10 0h1m9 0h1m9 0h1m9 0h1m10 0h1m9 0h1m9 0h1M105 691.5h1m9 0h1m10 0h1m9 0h1m9 0h1m9 0h1m10 0h1m9 0h1m9 0h1m9 0h1m10 0h1m9 0h1m9 0h1m9 0h1m10 0h1m9 0h1m9 0h1m9 0h1m10 0h1m9 0h1m9 0h1m9 0h1m10 0h1m9 0h1m9 0h1m9 0h1m10 0h1m9 0h1m9 0h1m9 0h1m10 0h1m9 0h1m9 0h1m9 0h1m10 0h1m9 0h1m9 0h1m9 0h1m10 0h1m9 0h1m9 0h1m9 0h1m10 0h1m9 0h1m9 0h1m9 0h1m10 0h1m9 0h1m9 0h1m9 0h1m10 0h1m9 0h1m9 0h1m9 0h1m10 0h1m9 0h1m9 0h1m9 0h1m10 0h1m9 0h1m9 0h1m9 0h1m10 0h1m9 0h1m9 0h1m9 0h1m10 0h1m9 0h1m9 0h1m9 0h1m10 0h1m9 0h1m9 0h1m9 0h1m10 0h1m9 0h1m9 0h1m9 0h1m10 0h1m9 0h1m9 0h1m9 0h1m10 0h1m9 0h1m9 0h1m9 0h1m10 0h1m9 0h1m9 0h1m9 0h1m10 0h1m9 0h1m9 0h1m9 0h1m10 0h1m9 0h1m9 0h1m9 0h1m10 0h1m9 0h1m9 0h1M105 681.5h1m9 0h1m10 0h1m9 0h1m9 0h1m9 0h1m10 0h1m9 0h1m9 0h1m9 0h1m10 0h1m9 0h1m9 0h1m9 0h1m10 0h1m9 0h1m9 0h1m9 0h1m10 0h1m9 0h1m9 0h1m9 0h1m10 0h1m9 0h1m9 0h1m9 0h1m10 0h1m9 0h1m9 0h1m9 0h1m10 0h1m9 0h1m9 0h1m9 0h1m10 0h1m9 0h1m9 0h1m9 0h1m10 0h1m9 0h1m9 0h1m9 0h1m10 0h1m9 0h1m9 0h1m9 0h1m10 0h1m9 0h1m9 0h1m9 0h1m10 0h1m9 0h1m9 0h1m9 0h1m10 0h1m9 0h1m9 0h1m9 0h1m10 0h1m9 0h1m9 0h1m9 0h1m10 0h1m9 0h1m9 0h1m9 0h1m10 0h1m9 0h1m9 0h1m9 0h1m10 0h1m9 0h1m9 0h1m9 0h1m10 0h1m9 0h1m9 0h1m9 0h1m10 0h1m9 0h1m9 0h1m9 0h1m10 0h1m9 0h1m9 0h1m9 0h1m10 0h1m9 0h1m9 0h1m9 0h1m10 0h1m9 0h1m9 0h1m9 0h1m10 0h1m9 0h1m9 0h1m9 0h1m10 0h1m9 0h1m9 0h1M105 670.5h1m9 0h1m10 0h1m9 0h1m9 0h1m9 0h1m10 0h1m9 0h1m9 0h1m9 0h1m10 0h1m9 0h1m9 0h1m9 0h1m10 0h1m9 0h1m9 0h1m9 0h1m10 0h1m9 0h1m9 0h1m9 0h1m10 0h1m9 0h1m9 0h1m9 0h1m10 0h1m9 0h1m9 0h1m9 0h1m10 0h1m9 0h1m9 0h1m9 0h1m10 0h1m9 0h1m9 0h1m9 0h1m10 0h1m9 0h1m9 0h1m9 0h1m10 0h1m9 0h1m9 0h1m9 0h1m10 0h1m9 0h1m9 0h1m9 0h1m10 0h1m9 0h1m9 0h1m9 0h1m10 0h1m9 0h1m9 0h1m9 0h1m10 0h1m9 0h1m9 0h1m9 0h1m10 0h1m9 0h1m9 0h1m9 0h1m10 0h1m9 0h1m9 0h1m9 0h1m10 0h1m9 0h1m9 0h1m9 0h1m10 0h1m9 0h1m9 0h1m9 0h1m10 0h1m9 0h1m9 0h1m9 0h1m10 0h1m9 0h1m9 0h1m9 0h1m10 0h1m9 0h1m9 0h1m9 0h1m10 0h1m9 0h1m9 0h1m9 0h1m10 0h1m9 0h1m9 0h1m9 0h1m10 0h1m9 0h1m9 0h1M105 660.5h1m9 0h1m10 0h1m9 0h1m9 0h1m9 0h1m10 0h1m9 0h1m9 0h1m9 0h1m10 0h1m9 0h1m9 0h1m9 0h1m10 0h1m9 0h1m9 0h1m9 0h1m10 0h1m9 0h1m9 0h1m9 0h1m10 0h1m9 0h1m9 0h1m9 0h1m10 0h1m9 0h1m9 0h1m9 0h1m10 0h1m9 0h1m9 0h1m9 0h1m10 0h1m9 0h1m9 0h1m9 0h1m10 0h1m9 0h1m9 0h1m9 0h1m10 0h1m9 0h1m9 0h1m9 0h1m10 0h1m9 0h1m9 0h1m9 0h1m10 0h1m9 0h1m9 0h1m9 0h1m10 0h1m9 0h1m9 0h1m9 0h1m10 0h1m9 0h1m9 0h1m9 0h1m10 0h1m9 0h1m9 0h1m9 0h1m10 0h1m9 0h1m9 0h1m9 0h1m10 0h1m9 0h1m9 0h1m9 0h1m10 0h1m9 0h1m9 0h1m9 0h1m10 0h1m9 0h1m9 0h1m9 0h1m10 0h1m9 0h1m9 0h1m9 0h1m10 0h1m9 0h1m9 0h1m9 0h1m10 0h1m9 0h1m9 0h1m9 0h1m10 0h1m9 0h1m9 0h1m9 0h1m10 0h1m9 0h1m9 0h1M105 650.5h1m9 0h1m10 0h1m9 0h1m9 0h1m9 0h1m10 0h1m9 0h1m9 0h1m9 0h1m10 0h1m9 0h1m9 0h1m9 0h1m10 0h1m9 0h1m9 0h1m9 0h1m10 0h1m9 0h1m9 0h1m9 0h1m10 0h1m9 0h1m9 0h1m9 0h1m10 0h1m9 0h1m9 0h1m9 0h1m10 0h1m9 0h1m9 0h1m9 0h1m10 0h1m9 0h1m9 0h1m9 0h1m10 0h1m9 0h1m9 0h1m9 0h1m10 0h1m9 0h1m9 0h1m9 0h1m10 0h1m9 0h1m9 0h1m9 0h1m10 0h1m9 0h1m9 0h1m9 0h1m10 0h1m9 0h1m9 0h1m9 0h1m10 0h1m9 0h1m9 0h1m9 0h1m10 0h1m9 0h1m9 0h1m9 0h1m10 0h1m9 0h1m9 0h1m9 0h1m10 0h1m9 0h1m9 0h1m9 0h1m10 0h1m9 0h1m9 0h1m9 0h1m10 0h1m9 0h1m9 0h1m9 0h1m10 0h1m9 0h1m9 0h1m9 0h1m10 0h1m9 0h1m9 0h1m9 0h1m10 0h1m9 0h1m9 0h1m9 0h1m10 0h1m9 0h1m9 0h1m9 0h1m10 0h1m9 0h1m9 0h1M105 640.5h1m9 0h1m10 0h1m9 0h1m9 0h1m9 0h1m10 0h1m9 0h1m9 0h1m9 0h1m10 0h1m9 0h1m9 0h1m9 0h1m10 0h1m9 0h1m9 0h1m9 0h1m10 0h1m9 0h1m9 0h1m9 0h1m10 0h1m9 0h1m9 0h1m9 0h1m10 0h1m9 0h1m9 0h1m9 0h1m10 0h1m9 0h1m9 0h1m9 0h1m10 0h1m9 0h1m9 0h1m9 0h1m10 0h1m9 0h1m9 0h1m9 0h1m10 0h1m9 0h1m9 0h1m9 0h1m10 0h1m9 0h1m9 0h1m9 0h1m10 0h1m9 0h1m9 0h1m9 0h1m10 0h1m9 0h1m9 0h1m9 0h1m10 0h1m9 0h1m9 0h1m9 0h1m10 0h1m9 0h1m9 0h1m9 0h1m10 0h1m9 0h1m9 0h1m9 0h1m10 0h1m9 0h1m9 0h1m9 0h1m10 0h1m9 0h1m9 0h1m9 0h1m10 0h1m9 0h1m9 0h1m9 0h1m10 0h1m9 0h1m9 0h1m9 0h1m10 0h1m9 0h1m9 0h1m9 0h1m10 0h1m9 0h1m9 0h1m9 0h1m10 0h1m9 0h1m9 0h1m9 0h1m10 0h1m9 0h1m9 0h1M105 629.5h1m9 0h1m10 0h1m9 0h1m9 0h1m9 0h1m10 0h1m9 0h1m9 0h1m9 0h1m10 0h1m9 0h1m9 0h1m9 0h1m10 0h1m9 0h1m9 0h1m9 0h1m10 0h1m9 0h1m9 0h1m9 0h1m10 0h1m9 0h1m9 0h1m9 0h1m10 0h1m9 0h1m9 0h1m9 0h1m10 0h1m9 0h1m9 0h1m9 0h1m10 0h1m9 0h1m9 0h1m9 0h1m10 0h1m9 0h1m9 0h1m9 0h1m10 0h1m9 0h1m9 0h1m9 0h1m10 0h1m9 0h1m9 0h1m9 0h1m10 0h1m9 0h1m9 0h1m9 0h1m10 0h1m9 0h1m9 0h1m9 0h1m10 0h1m9 0h1m9 0h1m9 0h1m10 0h1m9 0h1m9 0h1m9 0h1m10 0h1m9 0h1m9 0h1m9 0h1m10 0h1m9 0h1m9 0h1m9 0h1m10 0h1m9 0h1m9 0h1m9 0h1m10 0h1m9 0h1m9 0h1m9 0h1m10 0h1m9 0h1m9 0h1m9 0h1m10 0h1m9 0h1m9 0h1m9 0h1m10 0h1m9 0h1m9 0h1m9 0h1m10 0h1m9 0h1m9 0h1m9 0h1m10 0h1m9 0h1m9 0h1M105 619.5h1m9 0h1m10 0h1m9 0h1m9 0h1m9 0h1m10 0h1m9 0h1m9 0h1m9 0h1m10 0h1m9 0h1m9 0h1m9 0h1m10 0h1m9 0h1m9 0h1m9 0h1m10 0h1m9 0h1m9 0h1m9 0h1m10 0h1m9 0h1m9 0h1m9 0h1m10 0h1m9 0h1m9 0h1m9 0h1m10 0h1m9 0h1m9 0h1m9 0h1m10 0h1m9 0h1m9 0h1m9 0h1m10 0h1m9 0h1m9 0h1m9 0h1m10 0h1m9 0h1m9 0h1m9 0h1m10 0h1m9 0h1m9 0h1m9 0h1m10 0h1m9 0h1m9 0h1m9 0h1m10 0h1m9 0h1m9 0h1m9 0h1m10 0h1m9 0h1m9 0h1m9 0h1m10 0h1m9 0h1m9 0h1m9 0h1m10 0h1m9 0h1m9 0h1m9 0h1m10 0h1m9 0h1m9 0h1m9 0h1m10 0h1m9 0h1m9 0h1m9 0h1m10 0h1m9 0h1m9 0h1m9 0h1m10 0h1m9 0h1m9 0h1m9 0h1m10 0h1m9 0h1m9 0h1m9 0h1m10 0h1m9 0h1m9 0h1m9 0h1m10 0h1m9 0h1m9 0h1m9 0h1m10 0h1m9 0h1m9 0h1M105 609.5h1m9 0h1m10 0h1m9 0h1m9 0h1m9 0h1m10 0h1m9 0h1m9 0h1m9 0h1m10 0h1m9 0h1m9 0h1m9 0h1m10 0h1m9 0h1m9 0h1m9 0h1m10 0h1m9 0h1m9 0h1m9 0h1m10 0h1m9 0h1m9 0h1m9 0h1m10 0h1m9 0h1m9 0h1m9 0h1m10 0h1m9 0h1m9 0h1m9 0h1m10 0h1m9 0h1m9 0h1m9 0h1m10 0h1m9 0h1m9 0h1m9 0h1m10 0h1m9 0h1m9 0h1m9 0h1m10 0h1m9 0h1m9 0h1m9 0h1m10 0h1m9 0h1m9 0h1m9 0h1m10 0h1m9 0h1m9 0h1m9 0h1m10 0h1m9 0h1m9 0h1m9 0h1m10 0h1m9 0h1m9 0h1m9 0h1m10 0h1m9 0h1m9 0h1m9 0h1m10 0h1m9 0h1m9 0h1m9 0h1m10 0h1m9 0h1m9 0h1m9 0h1m10 0h1m9 0h1m9 0h1m9 0h1m10 0h1m9 0h1m9 0h1m9 0h1m10 0h1m9 0h1m9 0h1m9 0h1m10 0h1m9 0h1m9 0h1m9 0h1m10 0h1m9 0h1m9 0h1m9 0h1m10 0h1m9 0h1m9 0h1M105 599.5h1m9 0h1m10 0h1m9 0h1m9 0h1m9 0h1m10 0h1m9 0h1m9 0h1m9 0h1m10 0h1m9 0h1m9 0h1m9 0h1m10 0h1m9 0h1m9 0h1m9 0h1m10 0h1m9 0h1m9 0h1m9 0h1m10 0h1m9 0h1m9 0h1m9 0h1m10 0h1m9 0h1m9 0h1m9 0h1m10 0h1m9 0h1m9 0h1m9 0h1m10 0h1m9 0h1m9 0h1m9 0h1m10 0h1m9 0h1m9 0h1m9 0h1m10 0h1m9 0h1m9 0h1m9 0h1m10 0h1m9 0h1m9 0h1m9 0h1m10 0h1m9 0h1m9 0h1m9 0h1m10 0h1m9 0h1m9 0h1m9 0h1m10 0h1m9 0h1m9 0h1m9 0h1m10 0h1m9 0h1m9 0h1m9 0h1m10 0h1m9 0h1m9 0h1m9 0h1m10 0h1m9 0h1m9 0h1m9 0h1m10 0h1m9 0h1m9 0h1m9 0h1m10 0h1m9 0h1m9 0h1m9 0h1m10 0h1m9 0h1m9 0h1m9 0h1m10 0h1m9 0h1m9 0h1m9 0h1m10 0h1m9 0h1m9 0h1m9 0h1m10 0h1m9 0h1m9 0h1m9 0h1m10 0h1m9 0h1m9 0h1M105 588.5h1m9 0h1m10 0h1m9 0h1m9 0h1m9 0h1m10 0h1m9 0h1m9 0h1m9 0h1m10 0h1m9 0h1m9 0h1m9 0h1m10 0h1m9 0h1m9 0h1m9 0h1m10 0h1m9 0h1m9 0h1m9 0h1m10 0h1m9 0h1m9 0h1m9 0h1m10 0h1m9 0h1m9 0h1m9 0h1m10 0h1m9 0h1m9 0h1m9 0h1m10 0h1m9 0h1m9 0h1m9 0h1m10 0h1m9 0h1m9 0h1m9 0h1m10 0h1m9 0h1m9 0h1m9 0h1m10 0h1m9 0h1m9 0h1m9 0h1m10 0h1m9 0h1m9 0h1m9 0h1m10 0h1m9 0h1m9 0h1m9 0h1m10 0h1m9 0h1m9 0h1m9 0h1m10 0h1m9 0h1m9 0h1m9 0h1m10 0h1m9 0h1m9 0h1m9 0h1m10 0h1m9 0h1m9 0h1m9 0h1m10 0h1m9 0h1m9 0h1m9 0h1m10 0h1m9 0h1m9 0h1m9 0h1m10 0h1m9 0h1m9 0h1m9 0h1m10 0h1m9 0h1m9 0h1m9 0h1m10 0h1m9 0h1m9 0h1m9 0h1m10 0h1m9 0h1m9 0h1m9 0h1m10 0h1m9 0h1m9 0h1M105 578.5h1m9 0h1m10 0h1m9 0h1m9 0h1m9 0h1m10 0h1m9 0h1m9 0h1m9 0h1m10 0h1m9 0h1m9 0h1m9 0h1m10 0h1m9 0h1m9 0h1m9 0h1m10 0h1m9 0h1m9 0h1m9 0h1m10 0h1m9 0h1m9 0h1m9 0h1m10 0h1m9 0h1m9 0h1m9 0h1m10 0h1m9 0h1m9 0h1m9 0h1m10 0h1m9 0h1m9 0h1m9 0h1m10 0h1m9 0h1m9 0h1m9 0h1m10 0h1m9 0h1m9 0h1m9 0h1m10 0h1m9 0h1m9 0h1m9 0h1m10 0h1m9 0h1m9 0h1m9 0h1m10 0h1m9 0h1m9 0h1m9 0h1m10 0h1m9 0h1m9 0h1m9 0h1m10 0h1m9 0h1m9 0h1m9 0h1m10 0h1m9 0h1m9 0h1m9 0h1m10 0h1m9 0h1m9 0h1m9 0h1m10 0h1m9 0h1m9 0h1m9 0h1m10 0h1m9 0h1m9 0h1m9 0h1m10 0h1m9 0h1m9 0h1m9 0h1m10 0h1m9 0h1m9 0h1m9 0h1m10 0h1m9 0h1m9 0h1m9 0h1m10 0h1m9 0h1m9 0h1m9 0h1m10 0h1m9 0h1m9 0h1M105 568.5h1m9 0h1m10 0h1m9 0h1m9 0h1m9 0h1m10 0h1m9 0h1m9 0h1m9 0h1m10 0h1m9 0h1m9 0h1m9 0h1m10 0h1m9 0h1m9 0h1m9 0h1m10 0h1m9 0h1m9 0h1m9 0h1m10 0h1m9 0h1m9 0h1m9 0h1m10 0h1m9 0h1m9 0h1m9 0h1m10 0h1m9 0h1m9 0h1m9 0h1m10 0h1m9 0h1m9 0h1m9 0h1m10 0h1m9 0h1m9 0h1m9 0h1m10 0h1m9 0h1m9 0h1m9 0h1m10 0h1m9 0h1m9 0h1m9 0h1m10 0h1m9 0h1m9 0h1m9 0h1m10 0h1m9 0h1m9 0h1m9 0h1m10 0h1m9 0h1m9 0h1m9 0h1m10 0h1m9 0h1m9 0h1m9 0h1m10 0h1m9 0h1m9 0h1m9 0h1m10 0h1m9 0h1m9 0h1m9 0h1m10 0h1m9 0h1m9 0h1m9 0h1m10 0h1m9 0h1m9 0h1m9 0h1m10 0h1m9 0h1m9 0h1m9 0h1m10 0h1m9 0h1m9 0h1m9 0h1m10 0h1m9 0h1m9 0h1m9 0h1m10 0h1m9 0h1m9 0h1m9 0h1m10 0h1m9 0h1m9 0h1M105 558.5h1m9 0h1m10 0h1m9 0h1m9 0h1m9 0h1m10 0h1m9 0h1m9 0h1m9 0h1m10 0h1m9 0h1m9 0h1m9 0h1m10 0h1m9 0h1m9 0h1m9 0h1m10 0h1m9 0h1m9 0h1m9 0h1m10 0h1m9 0h1m9 0h1m9 0h1m10 0h1m9 0h1m9 0h1m9 0h1m10 0h1m9 0h1m9 0h1m9 0h1m10 0h1m9 0h1m9 0h1m9 0h1m10 0h1m9 0h1m9 0h1m9 0h1m10 0h1m9 0h1m9 0h1m9 0h1m10 0h1m9 0h1m9 0h1m9 0h1m10 0h1m9 0h1m9 0h1m9 0h1m10 0h1m9 0h1m9 0h1m9 0h1m10 0h1m9 0h1m9 0h1m9 0h1m10 0h1m9 0h1m9 0h1m9 0h1m10 0h1m9 0h1m9 0h1m9 0h1m10 0h1m9 0h1m9 0h1m9 0h1m10 0h1m9 0h1m9 0h1m9 0h1m10 0h1m9 0h1m9 0h1m9 0h1m10 0h1m9 0h1m9 0h1m9 0h1m10 0h1m9 0h1m9 0h1m9 0h1m10 0h1m9 0h1m9 0h1m9 0h1m10 0h1m9 0h1m9 0h1m9 0h1m10 0h1m9 0h1m9 0h1M105 547.5h1m9 0h1m10 0h1m9 0h1m9 0h1m9 0h1m10 0h1m9 0h1m9 0h1m9 0h1m10 0h1m9 0h1m9 0h1m9 0h1m10 0h1m9 0h1m9 0h1m9 0h1m10 0h1m9 0h1m9 0h1m9 0h1m10 0h1m9 0h1m9 0h1m9 0h1m10 0h1m9 0h1m9 0h1m9 0h1m10 0h1m9 0h1m9 0h1m9 0h1m10 0h1m9 0h1m9 0h1m9 0h1m10 0h1m9 0h1m9 0h1m9 0h1m10 0h1m9 0h1m9 0h1m9 0h1m10 0h1m9 0h1m9 0h1m9 0h1m10 0h1m9 0h1m9 0h1m9 0h1m10 0h1m9 0h1m9 0h1m9 0h1m10 0h1m9 0h1m9 0h1m9 0h1m10 0h1m9 0h1m9 0h1m9 0h1m10 0h1m9 0h1m9 0h1m9 0h1m10 0h1m9 0h1m9 0h1m9 0h1m10 0h1m9 0h1m9 0h1m9 0h1m10 0h1m9 0h1m9 0h1m9 0h1m10 0h1m9 0h1m9 0h1m9 0h1m10 0h1m9 0h1m9 0h1m9 0h1m10 0h1m9 0h1m9 0h1m9 0h1m10 0h1m9 0h1m9 0h1m9 0h1m10 0h1m9 0h1m9 0h1M105 537.5h1m9 0h1m10 0h1m9 0h1m9 0h1m9 0h1m10 0h1m9 0h1m9 0h1m9 0h1m10 0h1m9 0h1m9 0h1m9 0h1m10 0h1m9 0h1m9 0h1m9 0h1m10 0h1m9 0h1m9 0h1m9 0h1m10 0h1m9 0h1m9 0h1m9 0h1m10 0h1m9 0h1m9 0h1m9 0h1m10 0h1m9 0h1m9 0h1m9 0h1m10 0h1m9 0h1m9 0h1m9 0h1m10 0h1m9 0h1m9 0h1m9 0h1m10 0h1m9 0h1m9 0h1m9 0h1m10 0h1m9 0h1m9 0h1m9 0h1m10 0h1m9 0h1m9 0h1m9 0h1m10 0h1m9 0h1m9 0h1m9 0h1m10 0h1m9 0h1m9 0h1m9 0h1m10 0h1m9 0h1m9 0h1m9 0h1m10 0h1m9 0h1m9 0h1m9 0h1m10 0h1m9 0h1m9 0h1m9 0h1m10 0h1m9 0h1m9 0h1m9 0h1m10 0h1m9 0h1m9 0h1m9 0h1m10 0h1m9 0h1m9 0h1m9 0h1m10 0h1m9 0h1m9 0h1m9 0h1m10 0h1m9 0h1m9 0h1m9 0h1m10 0h1m9 0h1m9 0h1m9 0h1m10 0h1m9 0h1m9 0h1M105 527.5h1m9 0h1m10 0h1m9 0h1m9 0h1m9 0h1m10 0h1m9 0h1m9 0h1m9 0h1m10 0h1m9 0h1m9 0h1m9 0h1m10 0h1m9 0h1m9 0h1m9 0h1m10 0h1m9 0h1m9 0h1m9 0h1m10 0h1m9 0h1m9 0h1m9 0h1m10 0h1m9 0h1m9 0h1m9 0h1m10 0h1m9 0h1m9 0h1m9 0h1m10 0h1m9 0h1m9 0h1m9 0h1m10 0h1m9 0h1m9 0h1m9 0h1m10 0h1m9 0h1m9 0h1m9 0h1m10 0h1m9 0h1m9 0h1m9 0h1m10 0h1m9 0h1m9 0h1m9 0h1m10 0h1m9 0h1m9 0h1m9 0h1m10 0h1m9 0h1m9 0h1m9 0h1m10 0h1m9 0h1m9 0h1m9 0h1m10 0h1m9 0h1m9 0h1m9 0h1m10 0h1m9 0h1m9 0h1m9 0h1m10 0h1m9 0h1m9 0h1m9 0h1m10 0h1m9 0h1m9 0h1m9 0h1m10 0h1m9 0h1m9 0h1m9 0h1m10 0h1m9 0h1m9 0h1m9 0h1m10 0h1m9 0h1m9 0h1m9 0h1m10 0h1m9 0h1m9 0h1m9 0h1m10 0h1m9 0h1m9 0h1M105 517.5h1m9 0h1m10 0h1m9 0h1m9 0h1m9 0h1m10 0h1m9 0h1m9 0h1m9 0h1m10 0h1m9 0h1m9 0h1m9 0h1m10 0h1m9 0h1m9 0h1m9 0h1m10 0h1m9 0h1m9 0h1m9 0h1m10 0h1m9 0h1m9 0h1m9 0h1m10 0h1m9 0h1m9 0h1m9 0h1m10 0h1m9 0h1m9 0h1m9 0h1m10 0h1m9 0h1m9 0h1m9 0h1m10 0h1m9 0h1m9 0h1m9 0h1m10 0h1m9 0h1m9 0h1m9 0h1m10 0h1m9 0h1m9 0h1m9 0h1m10 0h1m9 0h1m9 0h1m9 0h1m10 0h1m9 0h1m9 0h1m9 0h1m10 0h1m9 0h1m9 0h1m9 0h1m10 0h1m9 0h1m9 0h1m9 0h1m10 0h1m9 0h1m9 0h1m9 0h1m10 0h1m9 0h1m9 0h1m9 0h1m10 0h1m9 0h1m9 0h1m9 0h1m10 0h1m9 0h1m9 0h1m9 0h1m10 0h1m9 0h1m9 0h1m9 0h1m10 0h1m9 0h1m9 0h1m9 0h1m10 0h1m9 0h1m9 0h1m9 0h1m10 0h1m9 0h1m9 0h1m9 0h1m10 0h1m9 0h1m9 0h1M105 506.5h1m9 0h1m10 0h1m9 0h1m9 0h1m9 0h1m10 0h1m9 0h1m9 0h1m9 0h1m10 0h1m9 0h1m9 0h1m9 0h1m10 0h1m9 0h1m9 0h1m9 0h1m10 0h1m9 0h1m9 0h1m9 0h1m10 0h1m9 0h1m9 0h1m9 0h1m10 0h1m9 0h1m9 0h1m9 0h1m10 0h1m9 0h1m9 0h1m9 0h1m10 0h1m9 0h1m9 0h1m9 0h1m10 0h1m9 0h1m9 0h1m9 0h1m10 0h1m9 0h1m9 0h1m9 0h1m10 0h1m9 0h1m9 0h1m9 0h1m10 0h1m9 0h1m9 0h1m9 0h1m10 0h1m9 0h1m9 0h1m9 0h1m10 0h1m9 0h1m9 0h1m9 0h1m10 0h1m9 0h1m9 0h1m9 0h1m10 0h1m9 0h1m9 0h1m9 0h1m10 0h1m9 0h1m9 0h1m9 0h1m10 0h1m9 0h1m9 0h1m9 0h1m10 0h1m9 0h1m9 0h1m9 0h1m10 0h1m9 0h1m9 0h1m9 0h1m10 0h1m9 0h1m9 0h1m9 0h1m10 0h1m9 0h1m9 0h1m9 0h1m10 0h1m9 0h1m9 0h1m9 0h1m10 0h1m9 0h1m9 0h1M105 496.5h1m9 0h1m10 0h1m9 0h1m9 0h1m9 0h1m10 0h1m9 0h1m9 0h1m9 0h1m10 0h1m9 0h1m9 0h1m9 0h1m10 0h1m9 0h1m9 0h1m9 0h1m10 0h1m9 0h1m9 0h1m9 0h1m10 0h1m9 0h1m9 0h1m9 0h1m10 0h1m9 0h1m9 0h1m9 0h1m10 0h1m9 0h1m9 0h1m9 0h1m10 0h1m9 0h1m9 0h1m9 0h1m10 0h1m9 0h1m9 0h1m9 0h1m10 0h1m9 0h1m9 0h1m9 0h1m10 0h1m9 0h1m9 0h1m9 0h1m10 0h1m9 0h1m9 0h1m9 0h1m10 0h1m9 0h1m9 0h1m9 0h1m10 0h1m9 0h1m9 0h1m9 0h1m10 0h1m9 0h1m9 0h1m9 0h1m10 0h1m9 0h1m9 0h1m9 0h1m10 0h1m9 0h1m9 0h1m9 0h1m10 0h1m9 0h1m9 0h1m9 0h1m10 0h1m9 0h1m9 0h1m9 0h1m10 0h1m9 0h1m9 0h1m9 0h1m10 0h1m9 0h1m9 0h1m9 0h1m10 0h1m9 0h1m9 0h1m9 0h1m10 0h1m9 0h1m9 0h1m9 0h1m10 0h1m9 0h1m9 0h1M105 486.5h1m9 0h1m10 0h1m9 0h1m9 0h1m9 0h1m10 0h1m9 0h1m9 0h1m9 0h1m10 0h1m9 0h1m9 0h1m9 0h1m10 0h1m9 0h1m9 0h1m9 0h1m10 0h1m9 0h1m9 0h1m9 0h1m10 0h1m9 0h1m9 0h1m9 0h1m10 0h1m9 0h1m9 0h1m9 0h1m10 0h1m9 0h1m9 0h1m9 0h1m10 0h1m9 0h1m9 0h1m9 0h1m10 0h1m9 0h1m9 0h1m9 0h1m10 0h1m9 0h1m9 0h1m9 0h1m10 0h1m9 0h1m9 0h1m9 0h1m10 0h1m9 0h1m9 0h1m9 0h1m10 0h1m9 0h1m9 0h1m9 0h1m10 0h1m9 0h1m9 0h1m9 0h1m10 0h1m9 0h1m9 0h1m9 0h1m10 0h1m9 0h1m9 0h1m9 0h1m10 0h1m9 0h1m9 0h1m9 0h1m10 0h1m9 0h1m9 0h1m9 0h1m10 0h1m9 0h1m9 0h1m9 0h1m10 0h1m9 0h1m9 0h1m9 0h1m10 0h1m9 0h1m9 0h1m9 0h1m10 0h1m9 0h1m9 0h1m9 0h1m10 0h1m9 0h1m9 0h1m9 0h1m10 0h1m9 0h1m9 0h1M105 476.5h1m9 0h1m10 0h1m9 0h1m9 0h1m9 0h1m10 0h1m9 0h1m9 0h1m9 0h1m10 0h1m9 0h1m9 0h1m9 0h1m10 0h1m9 0h1m9 0h1m9 0h1m10 0h1m9 0h1m9 0h1m9 0h1m10 0h1m9 0h1m9 0h1m9 0h1m10 0h1m9 0h1m9 0h1m9 0h1m10 0h1m9 0h1m9 0h1m9 0h1m10 0h1m9 0h1m9 0h1m9 0h1m10 0h1m9 0h1m9 0h1m9 0h1m10 0h1m9 0h1m9 0h1m9 0h1m10 0h1m9 0h1m9 0h1m9 0h1m10 0h1m9 0h1m9 0h1m9 0h1m10 0h1m9 0h1m9 0h1m9 0h1m10 0h1m9 0h1m9 0h1m9 0h1m10 0h1m9 0h1m9 0h1m9 0h1m10 0h1m9 0h1m9 0h1m9 0h1m10 0h1m9 0h1m9 0h1m9 0h1m10 0h1m9 0h1m9 0h1m9 0h1m10 0h1m9 0h1m9 0h1m9 0h1m10 0h1m9 0h1m9 0h1m9 0h1m10 0h1m9 0h1m9 0h1m9 0h1m10 0h1m9 0h1m9 0h1m9 0h1m10 0h1m9 0h1m9 0h1m9 0h1m10 0h1m9 0h1m9 0h1M105 465.5h1m9 0h1m10 0h1m9 0h1m9 0h1m9 0h1m10 0h1m9 0h1m9 0h1m9 0h1m10 0h1m9 0h1m9 0h1m9 0h1m10 0h1m9 0h1m9 0h1m9 0h1m10 0h1m9 0h1m9 0h1m9 0h1m10 0h1m9 0h1m9 0h1m9 0h1m10 0h1m9 0h1m9 0h1m9 0h1m10 0h1m9 0h1m9 0h1m9 0h1m10 0h1m9 0h1m9 0h1m9 0h1m10 0h1m9 0h1m9 0h1m9 0h1m10 0h1m9 0h1m9 0h1m9 0h1m10 0h1m9 0h1m9 0h1m9 0h1m10 0h1m9 0h1m9 0h1m9 0h1m10 0h1m9 0h1m9 0h1m9 0h1m10 0h1m9 0h1m9 0h1m9 0h1m10 0h1m9 0h1m9 0h1m9 0h1m10 0h1m9 0h1m9 0h1m9 0h1m10 0h1m9 0h1m9 0h1m9 0h1m10 0h1m9 0h1m9 0h1m9 0h1m10 0h1m9 0h1m9 0h1m9 0h1m10 0h1m9 0h1m9 0h1m9 0h1m10 0h1m9 0h1m9 0h1m9 0h1m10 0h1m9 0h1m9 0h1m9 0h1m10 0h1m9 0h1m9 0h1m9 0h1m10 0h1m9 0h1m9 0h1M105 455.5h1m9 0h1m10 0h1m9 0h1m9 0h1m9 0h1m10 0h1m9 0h1m9 0h1m9 0h1m10 0h1m9 0h1m9 0h1m9 0h1m10 0h1m9 0h1m9 0h1m9 0h1m10 0h1m9 0h1m9 0h1m9 0h1m10 0h1m9 0h1m9 0h1m9 0h1m10 0h1m9 0h1m9 0h1m9 0h1m10 0h1m9 0h1m9 0h1m9 0h1m10 0h1m9 0h1m9 0h1m9 0h1m10 0h1m9 0h1m9 0h1m9 0h1m10 0h1m9 0h1m9 0h1m9 0h1m10 0h1m9 0h1m9 0h1m9 0h1m10 0h1m9 0h1m9 0h1m9 0h1m10 0h1m9 0h1m9 0h1m9 0h1m10 0h1m9 0h1m9 0h1m9 0h1m10 0h1m9 0h1m9 0h1m9 0h1m10 0h1m9 0h1m9 0h1m9 0h1m10 0h1m9 0h1m9 0h1m9 0h1m10 0h1m9 0h1m9 0h1m9 0h1m10 0h1m9 0h1m9 0h1m9 0h1m10 0h1m9 0h1m9 0h1m9 0h1m10 0h1m9 0h1m9 0h1m9 0h1m10 0h1m9 0h1m9 0h1m9 0h1m10 0h1m9 0h1m9 0h1m9 0h1m10 0h1m9 0h1m9 0h1M105 445.5h1m9 0h1m10 0h1m9 0h1m9 0h1m9 0h1m10 0h1m9 0h1m9 0h1m9 0h1m10 0h1m9 0h1m9 0h1m9 0h1m10 0h1m9 0h1m9 0h1m9 0h1m10 0h1m9 0h1m9 0h1m9 0h1m10 0h1m9 0h1m9 0h1m9 0h1m10 0h1m9 0h1m9 0h1m9 0h1m10 0h1m9 0h1m9 0h1m9 0h1m10 0h1m9 0h1m9 0h1m9 0h1m10 0h1m9 0h1m9 0h1m9 0h1m10 0h1m9 0h1m9 0h1m9 0h1m10 0h1m9 0h1m9 0h1m9 0h1m10 0h1m9 0h1m9 0h1m9 0h1m10 0h1m9 0h1m9 0h1m9 0h1m10 0h1m9 0h1m9 0h1m9 0h1m10 0h1m9 0h1m9 0h1m9 0h1m10 0h1m9 0h1m9 0h1m9 0h1m10 0h1m9 0h1m9 0h1m9 0h1m10 0h1m9 0h1m9 0h1m9 0h1m10 0h1m9 0h1m9 0h1m9 0h1m10 0h1m9 0h1m9 0h1m9 0h1m10 0h1m9 0h1m9 0h1m9 0h1m10 0h1m9 0h1m9 0h1m9 0h1m10 0h1m9 0h1m9 0h1m9 0h1m10 0h1m9 0h1m9 0h1M105 435.5h1m9 0h1m10 0h1m9 0h1m9 0h1m9 0h1m10 0h1m9 0h1m9 0h1m9 0h1m10 0h1m9 0h1m9 0h1m9 0h1m10 0h1m9 0h1m9 0h1m9 0h1m10 0h1m9 0h1m9 0h1m9 0h1m10 0h1m9 0h1m9 0h1m9 0h1m10 0h1m9 0h1m9 0h1m9 0h1m10 0h1m9 0h1m9 0h1m9 0h1m10 0h1m9 0h1m9 0h1m9 0h1m10 0h1m9 0h1m9 0h1m9 0h1m10 0h1m9 0h1m9 0h1m9 0h1m10 0h1m9 0h1m9 0h1m9 0h1m10 0h1m9 0h1m9 0h1m9 0h1m10 0h1m9 0h1m9 0h1m9 0h1m10 0h1m9 0h1m9 0h1m9 0h1m10 0h1m9 0h1m9 0h1m9 0h1m10 0h1m9 0h1m9 0h1m9 0h1m10 0h1m9 0h1m9 0h1m9 0h1m10 0h1m9 0h1m9 0h1m9 0h1m10 0h1m9 0h1m9 0h1m9 0h1m10 0h1m9 0h1m9 0h1m9 0h1m10 0h1m9 0h1m9 0h1m9 0h1m10 0h1m9 0h1m9 0h1m9 0h1m10 0h1m9 0h1m9 0h1m9 0h1m10 0h1m9 0h1m9 0h1M105 424.5h1m9 0h1m10 0h1m9 0h1m9 0h1m9 0h1m10 0h1m9 0h1m9 0h1m9 0h1m10 0h1m9 0h1m9 0h1m9 0h1m10 0h1m9 0h1m9 0h1m9 0h1m10 0h1m9 0h1m9 0h1m9 0h1m10 0h1m9 0h1m9 0h1m9 0h1m10 0h1m9 0h1m9 0h1m9 0h1m10 0h1m9 0h1m9 0h1m9 0h1m10 0h1m9 0h1m9 0h1m9 0h1m10 0h1m9 0h1m9 0h1m9 0h1m10 0h1m9 0h1m9 0h1m9 0h1m10 0h1m9 0h1m9 0h1m9 0h1m10 0h1m9 0h1m9 0h1m9 0h1m10 0h1m9 0h1m9 0h1m9 0h1m10 0h1m9 0h1m9 0h1m9 0h1m10 0h1m9 0h1m9 0h1m9 0h1m10 0h1m9 0h1m9 0h1m9 0h1m10 0h1m9 0h1m9 0h1m9 0h1m10 0h1m9 0h1m9 0h1m9 0h1m10 0h1m9 0h1m9 0h1m9 0h1m10 0h1m9 0h1m9 0h1m9 0h1m10 0h1m9 0h1m9 0h1m9 0h1m10 0h1m9 0h1m9 0h1m9 0h1m10 0h1m9 0h1m9 0h1m9 0h1m10 0h1m9 0h1m9 0h1M105 414.5h1m9 0h1m10 0h1m9 0h1m9 0h1m9 0h1m10 0h1m9 0h1m9 0h1m9 0h1m10 0h1m9 0h1m9 0h1m9 0h1m10 0h1m9 0h1m9 0h1m9 0h1m10 0h1m9 0h1m9 0h1m9 0h1m10 0h1m9 0h1m9 0h1m9 0h1m10 0h1m9 0h1m9 0h1m9 0h1m10 0h1m9 0h1m9 0h1m9 0h1m10 0h1m9 0h1m9 0h1m9 0h1m10 0h1m9 0h1m9 0h1m9 0h1m10 0h1m9 0h1m9 0h1m9 0h1m10 0h1m9 0h1m9 0h1m9 0h1m10 0h1m9 0h1m9 0h1m9 0h1m10 0h1m9 0h1m9 0h1m9 0h1m10 0h1m9 0h1m9 0h1m9 0h1m10 0h1m9 0h1m9 0h1m9 0h1m10 0h1m9 0h1m9 0h1m9 0h1m10 0h1m9 0h1m9 0h1m9 0h1m10 0h1m9 0h1m9 0h1m9 0h1m10 0h1m9 0h1m9 0h1m9 0h1m10 0h1m9 0h1m9 0h1m9 0h1m10 0h1m9 0h1m9 0h1m9 0h1m10 0h1m9 0h1m9 0h1m9 0h1m10 0h1m9 0h1m9 0h1m9 0h1m10 0h1m9 0h1m9 0h1M105 404.5h1m9 0h1m10 0h1m9 0h1m9 0h1m9 0h1m10 0h1m9 0h1m9 0h1m9 0h1m10 0h1m9 0h1m9 0h1m9 0h1m10 0h1m9 0h1m9 0h1m9 0h1m10 0h1m9 0h1m9 0h1m9 0h1m10 0h1m9 0h1m9 0h1m9 0h1m10 0h1m9 0h1m9 0h1m9 0h1m10 0h1m9 0h1m9 0h1m9 0h1m10 0h1m9 0h1m9 0h1m9 0h1m10 0h1m9 0h1m9 0h1m9 0h1m10 0h1m9 0h1m9 0h1m9 0h1m10 0h1m9 0h1m9 0h1m9 0h1m10 0h1m9 0h1m9 0h1m9 0h1m10 0h1m9 0h1m9 0h1m9 0h1m10 0h1m9 0h1m9 0h1m9 0h1m10 0h1m9 0h1m9 0h1m9 0h1m10 0h1m9 0h1m9 0h1m9 0h1m10 0h1m9 0h1m9 0h1m9 0h1m10 0h1m9 0h1m9 0h1m9 0h1m10 0h1m9 0h1m9 0h1m9 0h1m10 0h1m9 0h1m9 0h1m9 0h1m10 0h1m9 0h1m9 0h1m9 0h1m10 0h1m9 0h1m9 0h1m9 0h1m10 0h1m9 0h1m9 0h1m9 0h1m10 0h1m9 0h1m9 0h1M105 394.5h1m9 0h1m10 0h1m9 0h1m9 0h1m9 0h1m10 0h1m9 0h1m9 0h1m9 0h1m10 0h1m9 0h1m9 0h1m9 0h1m10 0h1m9 0h1m9 0h1m9 0h1m10 0h1m9 0h1m9 0h1m9 0h1m10 0h1m9 0h1m9 0h1m9 0h1m10 0h1m9 0h1m9 0h1m9 0h1m10 0h1m9 0h1m9 0h1m9 0h1m10 0h1m9 0h1m9 0h1m9 0h1m10 0h1m9 0h1m9 0h1m9 0h1m10 0h1m9 0h1m9 0h1m9 0h1m10 0h1m9 0h1m9 0h1m9 0h1m10 0h1m9 0h1m9 0h1m9 0h1m10 0h1m9 0h1m9 0h1m9 0h1m10 0h1m9 0h1m9 0h1m9 0h1m10 0h1m9 0h1m9 0h1m9 0h1m10 0h1m9 0h1m9 0h1m9 0h1m10 0h1m9 0h1m9 0h1m9 0h1m10 0h1m9 0h1m9 0h1m9 0h1m10 0h1m9 0h1m9 0h1m9 0h1m10 0h1m9 0h1m9 0h1m9 0h1m10 0h1m9 0h1m9 0h1m9 0h1m10 0h1m9 0h1m9 0h1m9 0h1m10 0h1m9 0h1m9 0h1m9 0h1m10 0h1m9 0h1m9 0h1M105 383.5h1m9 0h1m10 0h1m9 0h1m9 0h1m9 0h1m10 0h1m9 0h1m9 0h1m9 0h1m10 0h1m9 0h1m9 0h1m9 0h1m10 0h1m9 0h1m9 0h1m9 0h1m10 0h1m9 0h1m9 0h1m9 0h1m10 0h1m9 0h1m9 0h1m9 0h1m10 0h1m9 0h1m9 0h1m9 0h1m10 0h1m9 0h1m9 0h1m9 0h1m10 0h1m9 0h1m9 0h1m9 0h1m10 0h1m9 0h1m9 0h1m9 0h1m10 0h1m9 0h1m9 0h1m9 0h1m10 0h1m9 0h1m9 0h1m9 0h1m10 0h1m9 0h1m9 0h1m9 0h1m10 0h1m9 0h1m9 0h1m9 0h1m10 0h1m9 0h1m9 0h1m9 0h1m10 0h1m9 0h1m9 0h1m9 0h1m10 0h1m9 0h1m9 0h1m9 0h1m10 0h1m9 0h1m9 0h1m9 0h1m10 0h1m9 0h1m9 0h1m9 0h1m10 0h1m9 0h1m9 0h1m9 0h1m10 0h1m9 0h1m9 0h1m9 0h1m10 0h1m9 0h1m9 0h1m9 0h1m10 0h1m9 0h1m9 0h1m9 0h1m10 0h1m9 0h1m9 0h1m9 0h1m10 0h1m9 0h1m9 0h1M105 373.5h1m9 0h1m10 0h1m9 0h1m9 0h1m9 0h1m10 0h1m9 0h1m9 0h1m9 0h1m10 0h1m9 0h1m9 0h1m9 0h1m10 0h1m9 0h1m9 0h1m9 0h1m10 0h1m9 0h1m9 0h1m9 0h1m10 0h1m9 0h1m9 0h1m9 0h1m10 0h1m9 0h1m9 0h1m9 0h1m10 0h1m9 0h1m9 0h1m9 0h1m10 0h1m9 0h1m9 0h1m9 0h1m10 0h1m9 0h1m9 0h1m9 0h1m10 0h1m9 0h1m9 0h1m9 0h1m10 0h1m9 0h1m9 0h1m9 0h1m10 0h1m9 0h1m9 0h1m9 0h1m10 0h1m9 0h1m9 0h1m9 0h1m10 0h1m9 0h1m9 0h1m9 0h1m10 0h1m9 0h1m9 0h1m9 0h1m10 0h1m9 0h1m9 0h1m9 0h1m10 0h1m9 0h1m9 0h1m9 0h1m10 0h1m9 0h1m9 0h1m9 0h1m10 0h1m9 0h1m9 0h1m9 0h1m10 0h1m9 0h1m9 0h1m9 0h1m10 0h1m9 0h1m9 0h1m9 0h1m10 0h1m9 0h1m9 0h1m9 0h1m10 0h1m9 0h1m9 0h1m9 0h1m10 0h1m9 0h1m9 0h1M105 363.5h1m9 0h1m10 0h1m9 0h1m9 0h1m9 0h1m10 0h1m9 0h1m9 0h1m9 0h1m10 0h1m9 0h1m9 0h1m9 0h1m10 0h1m9 0h1m9 0h1m9 0h1m10 0h1m9 0h1m9 0h1m9 0h1m10 0h1m9 0h1m9 0h1m9 0h1m10 0h1m9 0h1m9 0h1m9 0h1m10 0h1m9 0h1m9 0h1m9 0h1m10 0h1m9 0h1m9 0h1m9 0h1m10 0h1m9 0h1m9 0h1m9 0h1m10 0h1m9 0h1m9 0h1m9 0h1m10 0h1m9 0h1m9 0h1m9 0h1m10 0h1m9 0h1m9 0h1m9 0h1m10 0h1m9 0h1m9 0h1m9 0h1m10 0h1m9 0h1m9 0h1m9 0h1m10 0h1m9 0h1m9 0h1m9 0h1m10 0h1m9 0h1m9 0h1m9 0h1m10 0h1m9 0h1m9 0h1m9 0h1m10 0h1m9 0h1m9 0h1m9 0h1m10 0h1m9 0h1m9 0h1m9 0h1m10 0h1m9 0h1m9 0h1m9 0h1m10 0h1m9 0h1m9 0h1m9 0h1m10 0h1m9 0h1m9 0h1m9 0h1m10 0h1m9 0h1m9 0h1m9 0h1m10 0h1m9 0h1m9 0h1M105 353.5h1m9 0h1m10 0h1m9 0h1m9 0h1m9 0h1m10 0h1m9 0h1m9 0h1m9 0h1m10 0h1m9 0h1m9 0h1m9 0h1m10 0h1m9 0h1m9 0h1m9 0h1m10 0h1m9 0h1m9 0h1m9 0h1m10 0h1m9 0h1m9 0h1m9 0h1m10 0h1m9 0h1m9 0h1m9 0h1m10 0h1m9 0h1m9 0h1m9 0h1m10 0h1m9 0h1m9 0h1m9 0h1m10 0h1m9 0h1m9 0h1m9 0h1m10 0h1m9 0h1m9 0h1m9 0h1m10 0h1m9 0h1m9 0h1m9 0h1m10 0h1m9 0h1m9 0h1m9 0h1m10 0h1m9 0h1m9 0h1m9 0h1m10 0h1m9 0h1m9 0h1m9 0h1m10 0h1m9 0h1m9 0h1m9 0h1m10 0h1m9 0h1m9 0h1m9 0h1m10 0h1m9 0h1m9 0h1m9 0h1m10 0h1m9 0h1m9 0h1m9 0h1m10 0h1m9 0h1m9 0h1m9 0h1m10 0h1m9 0h1m9 0h1m9 0h1m10 0h1m9 0h1m9 0h1m9 0h1m10 0h1m9 0h1m9 0h1m9 0h1m10 0h1m9 0h1m9 0h1m9 0h1m10 0h1m9 0h1m9 0h1M105 342.5h1m9 0h1m10 0h1m9 0h1m9 0h1m9 0h1m10 0h1m9 0h1m9 0h1m9 0h1m10 0h1m9 0h1m9 0h1m9 0h1m10 0h1m9 0h1m9 0h1m9 0h1m10 0h1m9 0h1m9 0h1m9 0h1m10 0h1m9 0h1m9 0h1m9 0h1m10 0h1m9 0h1m9 0h1m9 0h1m10 0h1m9 0h1m9 0h1m9 0h1m10 0h1m9 0h1m9 0h1m9 0h1m10 0h1m9 0h1m9 0h1m9 0h1m10 0h1m9 0h1m9 0h1m9 0h1m10 0h1m9 0h1m9 0h1m9 0h1m10 0h1m9 0h1m9 0h1m9 0h1m10 0h1m9 0h1m9 0h1m9 0h1m10 0h1m9 0h1m9 0h1m9 0h1m10 0h1m9 0h1m9 0h1m9 0h1m10 0h1m9 0h1m9 0h1m9 0h1m10 0h1m9 0h1m9 0h1m9 0h1m10 0h1m9 0h1m9 0h1m9 0h1m10 0h1m9 0h1m9 0h1m9 0h1m10 0h1m9 0h1m9 0h1m9 0h1m10 0h1m9 0h1m9 0h1m9 0h1m10 0h1m9 0h1m9 0h1m9 0h1m10 0h1m9 0h1m9 0h1m9 0h1m10 0h1m9 0h1m9 0h1M105 332.5h1m9 0h1m10 0h1m9 0h1m9 0h1m9 0h1m10 0h1m9 0h1m9 0h1m9 0h1m10 0h1m9 0h1m9 0h1m9 0h1m10 0h1m9 0h1m9 0h1m9 0h1m10 0h1m9 0h1m9 0h1m9 0h1m10 0h1m9 0h1m9 0h1m9 0h1m10 0h1m9 0h1m9 0h1m9 0h1m10 0h1m9 0h1m9 0h1m9 0h1m10 0h1m9 0h1m9 0h1m9 0h1m10 0h1m9 0h1m9 0h1m9 0h1m10 0h1m9 0h1m9 0h1m9 0h1m10 0h1m9 0h1m9 0h1m9 0h1m10 0h1m9 0h1m9 0h1m9 0h1m10 0h1m9 0h1m9 0h1m9 0h1m10 0h1m9 0h1m9 0h1m9 0h1m10 0h1m9 0h1m9 0h1m9 0h1m10 0h1m9 0h1m9 0h1m9 0h1m10 0h1m9 0h1m9 0h1m9 0h1m10 0h1m9 0h1m9 0h1m9 0h1m10 0h1m9 0h1m9 0h1m9 0h1m10 0h1m9 0h1m9 0h1m9 0h1m10 0h1m9 0h1m9 0h1m9 0h1m10 0h1m9 0h1m9 0h1m9 0h1m10 0h1m9 0h1m9 0h1m9 0h1m10 0h1m9 0h1m9 0h1M105 322.5h1m9 0h1m10 0h1m9 0h1m9 0h1m9 0h1m10 0h1m9 0h1m9 0h1m9 0h1m10 0h1m9 0h1m9 0h1m9 0h1m10 0h1m9 0h1m9 0h1m9 0h1m10 0h1m9 0h1m9 0h1m9 0h1m10 0h1m9 0h1m9 0h1m9 0h1m10 0h1m9 0h1m9 0h1m9 0h1m10 0h1m9 0h1m9 0h1m9 0h1m10 0h1m9 0h1m9 0h1m9 0h1m10 0h1m9 0h1m9 0h1m9 0h1m10 0h1m9 0h1m9 0h1m9 0h1m10 0h1m9 0h1m9 0h1m9 0h1m10 0h1m9 0h1m9 0h1m9 0h1m10 0h1m9 0h1m9 0h1m9 0h1m10 0h1m9 0h1m9 0h1m9 0h1m10 0h1m9 0h1m9 0h1m9 0h1m10 0h1m9 0h1m9 0h1m9 0h1m10 0h1m9 0h1m9 0h1m9 0h1m10 0h1m9 0h1m9 0h1m9 0h1m10 0h1m9 0h1m9 0h1m9 0h1m10 0h1m9 0h1m9 0h1m9 0h1m10 0h1m9 0h1m9 0h1m9 0h1m10 0h1m9 0h1m9 0h1m9 0h1m10 0h1m9 0h1m9 0h1m9 0h1m10 0h1m9 0h1m9 0h1M105 312.5h1m9 0h1m10 0h1m9 0h1m9 0h1m9 0h1m10 0h1m9 0h1m9 0h1m9 0h1m10 0h1m9 0h1m9 0h1m9 0h1m10 0h1m9 0h1m9 0h1m9 0h1m10 0h1m9 0h1m9 0h1m9 0h1m10 0h1m9 0h1m9 0h1m9 0h1m10 0h1m9 0h1m9 0h1m9 0h1m10 0h1m9 0h1m9 0h1m9 0h1m10 0h1m9 0h1m9 0h1m9 0h1m10 0h1m9 0h1m9 0h1m9 0h1m10 0h1m9 0h1m9 0h1m9 0h1m10 0h1m9 0h1m9 0h1m9 0h1m10 0h1m9 0h1m9 0h1m9 0h1m10 0h1m9 0h1m9 0h1m9 0h1m10 0h1m9 0h1m9 0h1m9 0h1m10 0h1m9 0h1m9 0h1m9 0h1m10 0h1m9 0h1m9 0h1m9 0h1m10 0h1m9 0h1m9 0h1m9 0h1m10 0h1m9 0h1m9 0h1m9 0h1m10 0h1m9 0h1m9 0h1m9 0h1m10 0h1m9 0h1m9 0h1m9 0h1m10 0h1m9 0h1m9 0h1m9 0h1m10 0h1m9 0h1m9 0h1m9 0h1m10 0h1m9 0h1m9 0h1m9 0h1m10 0h1m9 0h1m9 0h1M105 301.5h1m9 0h1m10 0h1m9 0h1m9 0h1m9 0h1m10 0h1m9 0h1m9 0h1m9 0h1m10 0h1m9 0h1m9 0h1m9 0h1m10 0h1m9 0h1m9 0h1m9 0h1m10 0h1m9 0h1m9 0h1m9 0h1m10 0h1m9 0h1m9 0h1m9 0h1m10 0h1m9 0h1m9 0h1m9 0h1m10 0h1m9 0h1m9 0h1m9 0h1m10 0h1m9 0h1m9 0h1m9 0h1m10 0h1m9 0h1m9 0h1m9 0h1m10 0h1m9 0h1m9 0h1m9 0h1m10 0h1m9 0h1m9 0h1m9 0h1m10 0h1m9 0h1m9 0h1m9 0h1m10 0h1m9 0h1m9 0h1m9 0h1m10 0h1m9 0h1m9 0h1m9 0h1m10 0h1m9 0h1m9 0h1m9 0h1m10 0h1m9 0h1m9 0h1m9 0h1m10 0h1m9 0h1m9 0h1m9 0h1m10 0h1m9 0h1m9 0h1m9 0h1m10 0h1m9 0h1m9 0h1m9 0h1m10 0h1m9 0h1m9 0h1m9 0h1m10 0h1m9 0h1m9 0h1m9 0h1m10 0h1m9 0h1m9 0h1m9 0h1m10 0h1m9 0h1m9 0h1m9 0h1m10 0h1m9 0h1m9 0h1M105 291.5h1m9 0h1m10 0h1m9 0h1m9 0h1m9 0h1m10 0h1m9 0h1m9 0h1m9 0h1m10 0h1m9 0h1m9 0h1m9 0h1m10 0h1m9 0h1m9 0h1m9 0h1m10 0h1m9 0h1m9 0h1m9 0h1m10 0h1m9 0h1m9 0h1m9 0h1m10 0h1m9 0h1m9 0h1m9 0h1m10 0h1m9 0h1m9 0h1m9 0h1m10 0h1m9 0h1m9 0h1m9 0h1m10 0h1m9 0h1m9 0h1m9 0h1m10 0h1m9 0h1m9 0h1m9 0h1m10 0h1m9 0h1m9 0h1m9 0h1m10 0h1m9 0h1m9 0h1m9 0h1m10 0h1m9 0h1m9 0h1m9 0h1m10 0h1m9 0h1m9 0h1m9 0h1m10 0h1m9 0h1m9 0h1m9 0h1m10 0h1m9 0h1m9 0h1m9 0h1m10 0h1m9 0h1m9 0h1m9 0h1m10 0h1m9 0h1m9 0h1m9 0h1m10 0h1m9 0h1m9 0h1m9 0h1m10 0h1m9 0h1m9 0h1m9 0h1m10 0h1m9 0h1m9 0h1m9 0h1m10 0h1m9 0h1m9 0h1m9 0h1m10 0h1m9 0h1m9 0h1m9 0h1m10 0h1m9 0h1m9 0h1M105 281.5h1m9 0h1m10 0h1m9 0h1m9 0h1m9 0h1m10 0h1m9 0h1m9 0h1m9 0h1m10 0h1m9 0h1m9 0h1m9 0h1m10 0h1m9 0h1m9 0h1m9 0h1m10 0h1m9 0h1m9 0h1m9 0h1m10 0h1m9 0h1m9 0h1m9 0h1m10 0h1m9 0h1m9 0h1m9 0h1m10 0h1m9 0h1m9 0h1m9 0h1m10 0h1m9 0h1m9 0h1m9 0h1m10 0h1m9 0h1m9 0h1m9 0h1m10 0h1m9 0h1m9 0h1m9 0h1m10 0h1m9 0h1m9 0h1m9 0h1m10 0h1m9 0h1m9 0h1m9 0h1m10 0h1m9 0h1m9 0h1m9 0h1m10 0h1m9 0h1m9 0h1m9 0h1m10 0h1m9 0h1m9 0h1m9 0h1m10 0h1m9 0h1m9 0h1m9 0h1m10 0h1m9 0h1m9 0h1m9 0h1m10 0h1m9 0h1m9 0h1m9 0h1m10 0h1m9 0h1m9 0h1m9 0h1m10 0h1m9 0h1m9 0h1m9 0h1m10 0h1m9 0h1m9 0h1m9 0h1m10 0h1m9 0h1m9 0h1m9 0h1m10 0h1m9 0h1m9 0h1m9 0h1m10 0h1m9 0h1m9 0h1M105 271.5h1m9 0h1m10 0h1m9 0h1m9 0h1m9 0h1m10 0h1m9 0h1m9 0h1m9 0h1m10 0h1m9 0h1m9 0h1m9 0h1m10 0h1m9 0h1m9 0h1m9 0h1m10 0h1m9 0h1m9 0h1m9 0h1m10 0h1m9 0h1m9 0h1m9 0h1m10 0h1m9 0h1m9 0h1m9 0h1m10 0h1m9 0h1m9 0h1m9 0h1m10 0h1m9 0h1m9 0h1m9 0h1m10 0h1m9 0h1m9 0h1m9 0h1m10 0h1m9 0h1m9 0h1m9 0h1m10 0h1m9 0h1m9 0h1m9 0h1m10 0h1m9 0h1m9 0h1m9 0h1m10 0h1m9 0h1m9 0h1m9 0h1m10 0h1m9 0h1m9 0h1m9 0h1m10 0h1m9 0h1m9 0h1m9 0h1m10 0h1m9 0h1m9 0h1m9 0h1m10 0h1m9 0h1m9 0h1m9 0h1m10 0h1m9 0h1m9 0h1m9 0h1m10 0h1m9 0h1m9 0h1m9 0h1m10 0h1m9 0h1m9 0h1m9 0h1m10 0h1m9 0h1m9 0h1m9 0h1m10 0h1m9 0h1m9 0h1m9 0h1m10 0h1m9 0h1m9 0h1m9 0h1m10 0h1m9 0h1m9 0h1M105 260.5h1m9 0h1m10 0h1m9 0h1m9 0h1m9 0h1m10 0h1m9 0h1m9 0h1m9 0h1m10 0h1m9 0h1m9 0h1m9 0h1m10 0h1m9 0h1m9 0h1m9 0h1m10 0h1m9 0h1m9 0h1m9 0h1m10 0h1m9 0h1m9 0h1m9 0h1m10 0h1m9 0h1m9 0h1m9 0h1m10 0h1m9 0h1m9 0h1m9 0h1m10 0h1m9 0h1m9 0h1m9 0h1m10 0h1m9 0h1m9 0h1m9 0h1m10 0h1m9 0h1m9 0h1m9 0h1m10 0h1m9 0h1m9 0h1m9 0h1m10 0h1m9 0h1m9 0h1m9 0h1m10 0h1m9 0h1m9 0h1m9 0h1m10 0h1m9 0h1m9 0h1m9 0h1m10 0h1m9 0h1m9 0h1m9 0h1m10 0h1m9 0h1m9 0h1m9 0h1m10 0h1m9 0h1m9 0h1m9 0h1m10 0h1m9 0h1m9 0h1m9 0h1m10 0h1m9 0h1m9 0h1m9 0h1m10 0h1m9 0h1m9 0h1m9 0h1m10 0h1m9 0h1m9 0h1m9 0h1m10 0h1m9 0h1m9 0h1m9 0h1m10 0h1m9 0h1m9 0h1m9 0h1m10 0h1m9 0h1m9 0h1M105 250.5h1m9 0h1m10 0h1m9 0h1m9 0h1m9 0h1m10 0h1m9 0h1m9 0h1m9 0h1m10 0h1m9 0h1m9 0h1m9 0h1m10 0h1m9 0h1m9 0h1m9 0h1m10 0h1m9 0h1m9 0h1m9 0h1m10 0h1m9 0h1m9 0h1m9 0h1m10 0h1m9 0h1m9 0h1m9 0h1m10 0h1m9 0h1m9 0h1m9 0h1m10 0h1m9 0h1m9 0h1m9 0h1m10 0h1m9 0h1m9 0h1m9 0h1m10 0h1m9 0h1m9 0h1m9 0h1m10 0h1m9 0h1m9 0h1m9 0h1m10 0h1m9 0h1m9 0h1m9 0h1m10 0h1m9 0h1m9 0h1m9 0h1m10 0h1m9 0h1m9 0h1m9 0h1m10 0h1m9 0h1m9 0h1m9 0h1m10 0h1m9 0h1m9 0h1m9 0h1m10 0h1m9 0h1m9 0h1m9 0h1m10 0h1m9 0h1m9 0h1m9 0h1m10 0h1m9 0h1m9 0h1m9 0h1m10 0h1m9 0h1m9 0h1m9 0h1m10 0h1m9 0h1m9 0h1m9 0h1m10 0h1m9 0h1m9 0h1m9 0h1m10 0h1m9 0h1m9 0h1m9 0h1m10 0h1m9 0h1m9 0h1M105 240.5h1m9 0h1m10 0h1m9 0h1m9 0h1m9 0h1m10 0h1m9 0h1m9 0h1m9 0h1m10 0h1m9 0h1m9 0h1m9 0h1m10 0h1m9 0h1m9 0h1m9 0h1m10 0h1m9 0h1m9 0h1m9 0h1m10 0h1m9 0h1m9 0h1m9 0h1m10 0h1m9 0h1m9 0h1m9 0h1m10 0h1m9 0h1m9 0h1m9 0h1m10 0h1m9 0h1m9 0h1m9 0h1m10 0h1m9 0h1m9 0h1m9 0h1m10 0h1m9 0h1m9 0h1m9 0h1m10 0h1m9 0h1m9 0h1m9 0h1m10 0h1m9 0h1m9 0h1m9 0h1m10 0h1m9 0h1m9 0h1m9 0h1m10 0h1m9 0h1m9 0h1m9 0h1m10 0h1m9 0h1m9 0h1m9 0h1m10 0h1m9 0h1m9 0h1m9 0h1m10 0h1m9 0h1m9 0h1m9 0h1m10 0h1m9 0h1m9 0h1m9 0h1m10 0h1m9 0h1m9 0h1m9 0h1m10 0h1m9 0h1m9 0h1m9 0h1m10 0h1m9 0h1m9 0h1m9 0h1m10 0h1m9 0h1m9 0h1m9 0h1m10 0h1m9 0h1m9 0h1m9 0h1m10 0h1m9 0h1m9 0h1M105 230.5h1m9 0h1m10 0h1m9 0h1m9 0h1m9 0h1m10 0h1m9 0h1m9 0h1m9 0h1m10 0h1m9 0h1m9 0h1m9 0h1m10 0h1m9 0h1m9 0h1m9 0h1m10 0h1m9 0h1m9 0h1m9 0h1m10 0h1m9 0h1m9 0h1m9 0h1m10 0h1m9 0h1m9 0h1m9 0h1m10 0h1m9 0h1m9 0h1m9 0h1m10 0h1m9 0h1m9 0h1m9 0h1m10 0h1m9 0h1m9 0h1m9 0h1m10 0h1m9 0h1m9 0h1m9 0h1m10 0h1m9 0h1m9 0h1m9 0h1m10 0h1m9 0h1m9 0h1m9 0h1m10 0h1m9 0h1m9 0h1m9 0h1m10 0h1m9 0h1m9 0h1m9 0h1m10 0h1m9 0h1m9 0h1m9 0h1m10 0h1m9 0h1m9 0h1m9 0h1m10 0h1m9 0h1m9 0h1m9 0h1m10 0h1m9 0h1m9 0h1m9 0h1m10 0h1m9 0h1m9 0h1m9 0h1m10 0h1m9 0h1m9 0h1m9 0h1m10 0h1m9 0h1m9 0h1m9 0h1m10 0h1m9 0h1m9 0h1m9 0h1m10 0h1m9 0h1m9 0h1m9 0h1m10 0h1m9 0h1m9 0h1M105 219.5h1m9 0h1m10 0h1m9 0h1m9 0h1m9 0h1m10 0h1m9 0h1m9 0h1m9 0h1m10 0h1m9 0h1m9 0h1m9 0h1m10 0h1m9 0h1m9 0h1m9 0h1m10 0h1m9 0h1m9 0h1m9 0h1m10 0h1m9 0h1m9 0h1m9 0h1m10 0h1m9 0h1m9 0h1m9 0h1m10 0h1m9 0h1m9 0h1m9 0h1m10 0h1m9 0h1m9 0h1m9 0h1m10 0h1m9 0h1m9 0h1m9 0h1m10 0h1m9 0h1m9 0h1m9 0h1m10 0h1m9 0h1m9 0h1m9 0h1m10 0h1m9 0h1m9 0h1m9 0h1m10 0h1m9 0h1m9 0h1m9 0h1m10 0h1m9 0h1m9 0h1m9 0h1m10 0h1m9 0h1m9 0h1m9 0h1m10 0h1m9 0h1m9 0h1m9 0h1m10 0h1m9 0h1m9 0h1m9 0h1m10 0h1m9 0h1m9 0h1m9 0h1m10 0h1m9 0h1m9 0h1m9 0h1m10 0h1m9 0h1m9 0h1m9 0h1m10 0h1m9 0h1m9 0h1m9 0h1m10 0h1m9 0h1m9 0h1m9 0h1m10 0h1m9 0h1m9 0h1m9 0h1m10 0h1m9 0h1m9 0h1M105 209.5h1m9 0h1m10 0h1m9 0h1m9 0h1m9 0h1m10 0h1m9 0h1m9 0h1m9 0h1m10 0h1m9 0h1m9 0h1m9 0h1m10 0h1m9 0h1m9 0h1m9 0h1m10 0h1m9 0h1m9 0h1m9 0h1m10 0h1m9 0h1m9 0h1m9 0h1m10 0h1m9 0h1m9 0h1m9 0h1m10 0h1m9 0h1m9 0h1m9 0h1m10 0h1m9 0h1m9 0h1m9 0h1m10 0h1m9 0h1m9 0h1m9 0h1m10 0h1m9 0h1m9 0h1m9 0h1m10 0h1m9 0h1m9 0h1m9 0h1m10 0h1m9 0h1m9 0h1m9 0h1m10 0h1m9 0h1m9 0h1m9 0h1m10 0h1m9 0h1m9 0h1m9 0h1m10 0h1m9 0h1m9 0h1m9 0h1m10 0h1m9 0h1m9 0h1m9 0h1m10 0h1m9 0h1m9 0h1m9 0h1m10 0h1m9 0h1m9 0h1m9 0h1m10 0h1m9 0h1m9 0h1m9 0h1m10 0h1m9 0h1m9 0h1m9 0h1m10 0h1m9 0h1m9 0h1m9 0h1m10 0h1m9 0h1m9 0h1m9 0h1m10 0h1m9 0h1m9 0h1m9 0h1m10 0h1m9 0h1m9 0h1M105 199.5h1m9 0h1m10 0h1m9 0h1m9 0h1m9 0h1m10 0h1m9 0h1m9 0h1m9 0h1m10 0h1m9 0h1m9 0h1m9 0h1m10 0h1m9 0h1m9 0h1m9 0h1m10 0h1m9 0h1m9 0h1m9 0h1m10 0h1m9 0h1m9 0h1m9 0h1m10 0h1m9 0h1m9 0h1m9 0h1m10 0h1m9 0h1m9 0h1m9 0h1m10 0h1m9 0h1m9 0h1m9 0h1m10 0h1m9 0h1m9 0h1m9 0h1m10 0h1m9 0h1m9 0h1m9 0h1m10 0h1m9 0h1m9 0h1m9 0h1m10 0h1m9 0h1m9 0h1m9 0h1m10 0h1m9 0h1m9 0h1m9 0h1m10 0h1m9 0h1m9 0h1m9 0h1m10 0h1m9 0h1m9 0h1m9 0h1m10 0h1m9 0h1m9 0h1m9 0h1m10 0h1m9 0h1m9 0h1m9 0h1m10 0h1m9 0h1m9 0h1m9 0h1m10 0h1m9 0h1m9 0h1m9 0h1m10 0h1m9 0h1m9 0h1m9 0h1m10 0h1m9 0h1m9 0h1m9 0h1m10 0h1m9 0h1m9 0h1m9 0h1m10 0h1m9 0h1m9 0h1m9 0h1m10 0h1m9 0h1m9 0h1M105 189.5h1m9 0h1m10 0h1m9 0h1m9 0h1m9 0h1m10 0h1m9 0h1m9 0h1m9 0h1m10 0h1m9 0h1m9 0h1m9 0h1m10 0h1m9 0h1m9 0h1m9 0h1m10 0h1m9 0h1m9 0h1m9 0h1m10 0h1m9 0h1m9 0h1m9 0h1m10 0h1m9 0h1m9 0h1m9 0h1m10 0h1m9 0h1m9 0h1m9 0h1m10 0h1m9 0h1m9 0h1m9 0h1m10 0h1m9 0h1m9 0h1m9 0h1m10 0h1m9 0h1m9 0h1m9 0h1m10 0h1m9 0h1m9 0h1m9 0h1m10 0h1m9 0h1m9 0h1m9 0h1m10 0h1m9 0h1m9 0h1m9 0h1m10 0h1m9 0h1m9 0h1m9 0h1m10 0h1m9 0h1m9 0h1m9 0h1m10 0h1m9 0h1m9 0h1m9 0h1m10 0h1m9 0h1m9 0h1m9 0h1m10 0h1m9 0h1m9 0h1m9 0h1m10 0h1m9 0h1m9 0h1m9 0h1m10 0h1m9 0h1m9 0h1m9 0h1m10 0h1m9 0h1m9 0h1m9 0h1m10 0h1m9 0h1m9 0h1m9 0h1m10 0h1m9 0h1m9 0h1m9 0h1m10 0h1m9 0h1m9 0h1M105 178.5h1m9 0h1m10 0h1m9 0h1m9 0h1m9 0h1m10 0h1m9 0h1m9 0h1m9 0h1m10 0h1m9 0h1m9 0h1m9 0h1m10 0h1m9 0h1m9 0h1m9 0h1m10 0h1m9 0h1m9 0h1m9 0h1m10 0h1m9 0h1m9 0h1m9 0h1m10 0h1m9 0h1m9 0h1m9 0h1m10 0h1m9 0h1m9 0h1m9 0h1m10 0h1m9 0h1m9 0h1m9 0h1m10 0h1m9 0h1m9 0h1m9 0h1m10 0h1m9 0h1m9 0h1m9 0h1m10 0h1m9 0h1m9 0h1m9 0h1m10 0h1m9 0h1m9 0h1m9 0h1m10 0h1m9 0h1m9 0h1m9 0h1m10 0h1m9 0h1m9 0h1m9 0h1m10 0h1m9 0h1m9 0h1m9 0h1m10 0h1m9 0h1m9 0h1m9 0h1m10 0h1m9 0h1m9 0h1m9 0h1m10 0h1m9 0h1m9 0h1m9 0h1m10 0h1m9 0h1m9 0h1m9 0h1m10 0h1m9 0h1m9 0h1m9 0h1m10 0h1m9 0h1m9 0h1m9 0h1m10 0h1m9 0h1m9 0h1m9 0h1m10 0h1m9 0h1m9 0h1m9 0h1m10 0h1m9 0h1m9 0h1M105 168.5h1m9 0h1m10 0h1m9 0h1m9 0h1m9 0h1m10 0h1m9 0h1m9 0h1m9 0h1m10 0h1m9 0h1m9 0h1m9 0h1m10 0h1m9 0h1m9 0h1m9 0h1m10 0h1m9 0h1m9 0h1m9 0h1m10 0h1m9 0h1m9 0h1m9 0h1m10 0h1m9 0h1m9 0h1m9 0h1m10 0h1m9 0h1m9 0h1m9 0h1m10 0h1m9 0h1m9 0h1m9 0h1m10 0h1m9 0h1m9 0h1m9 0h1m10 0h1m9 0h1m9 0h1m9 0h1m10 0h1m9 0h1m9 0h1m9 0h1m10 0h1m9 0h1m9 0h1m9 0h1m10 0h1m9 0h1m9 0h1m9 0h1m10 0h1m9 0h1m9 0h1m9 0h1m10 0h1m9 0h1m9 0h1m9 0h1m10 0h1m9 0h1m9 0h1m9 0h1m10 0h1m9 0h1m9 0h1m9 0h1m10 0h1m9 0h1m9 0h1m9 0h1m10 0h1m9 0h1m9 0h1m9 0h1m10 0h1m9 0h1m9 0h1m9 0h1m10 0h1m9 0h1m9 0h1m9 0h1m10 0h1m9 0h1m9 0h1m9 0h1m10 0h1m9 0h1m9 0h1m9 0h1m10 0h1m9 0h1m9 0h1M105 158.5h1m9 0h1m10 0h1m9 0h1m9 0h1m9 0h1m10 0h1m9 0h1m9 0h1m9 0h1m10 0h1m9 0h1m9 0h1m9 0h1m10 0h1m9 0h1m9 0h1m9 0h1m10 0h1m9 0h1m9 0h1m9 0h1m10 0h1m9 0h1m9 0h1m9 0h1m10 0h1m9 0h1m9 0h1m9 0h1m10 0h1m9 0h1m9 0h1m9 0h1m10 0h1m9 0h1m9 0h1m9 0h1m10 0h1m9 0h1m9 0h1m9 0h1m10 0h1m9 0h1m9 0h1m9 0h1m10 0h1m9 0h1m9 0h1m9 0h1m10 0h1m9 0h1m9 0h1m9 0h1m10 0h1m9 0h1m9 0h1m9 0h1m10 0h1m9 0h1m9 0h1m9 0h1m10 0h1m9 0h1m9 0h1m9 0h1m10 0h1m9 0h1m9 0h1m9 0h1m10 0h1m9 0h1m9 0h1m9 0h1m10 0h1m9 0h1m9 0h1m9 0h1m10 0h1m9 0h1m9 0h1m9 0h1m10 0h1m9 0h1m9 0h1m9 0h1m10 0h1m9 0h1m9 0h1m9 0h1m10 0h1m9 0h1m9 0h1m9 0h1m10 0h1m9 0h1m9 0h1m9 0h1m10 0h1m9 0h1m9 0h1" stroke="#444" stroke-width="1"/><path d="M166.2 270.55 H1048.7 A20 20 0 0 1 1068.7 290.55 V609.3 A20 20 0 0 1 1048.7 629.3 H166.2 A20 20 0 0 1 146.2 609.3 V290.55 A20 20 0 0 1 166.2 270.55 Z" fill="none" stroke="#fff" stroke-width="2.6"/><path d="M232.75 327.25H235.2M237.9 327.25H239.5M242.2 327.25H251.2M253.9 327.25H255.5M258.2 327.25H267.2M269.9 327.25H271.5M274.2 327.25H283.2M285.9 327.25H287.5M290.2 327.25H299.2M301.9 327.25H303.5M306.2 327.25H315.2M317.9 327.25H319.5M322.2 327.25H331.2M333.9 327.25H335.5M338.2 327.25H347.2M349.9 327.25H351.5M354.2 327.25H357.05" stroke="#aaaaaa" stroke-width="1.6"/><path d="M232.75 398.75H235.2M237.9 398.75H239.5M242.2 398.75H251.2M253.9 398.75H255.5M258.2 398.75H267.2M269.9 398.75H271.5M274.2 398.75H283.2M285.9 398.75H287.5M290.2 398.75H299.2M301.9 398.75H303.5M306.2 398.75H315.2M317.9 398.75H319.5M322.2 398.75H331.2M333.9 398.75H335.5M338.2 398.75H347.2M349.9 398.75H351.5M354.2 398.75H357.05" stroke="#aaaaaa" stroke-width="1.6"/><path d="M357.05 327.25 A35.75 35.75 0 0 1 357.05 398.75 M232.75 398.75 A35.75 35.75 0 0 1 232.75 327.25" fill="none" stroke="#aaaaaa" stroke-width="1.6" stroke-dasharray="9 2.7 1.6 2.7" stroke-dashoffset="2"/><path d="M254 337.6 H335.4 Q344.9 337.6 344.2 346.6 L339.1 379.6 Q338.2 388 329.6 388 H259.8 Q251.2 388 250.3 379.6 L245.2 346.6 Q244.5 337.6 254 337.6Z" fill="none" stroke="#fff" stroke-width="2.6"/><circle cx="233.3" cy="363" r="7.6" fill="none" stroke="#fff" stroke-width="2.6"/><circle cx="356.3" cy="363" r="7.6" fill="none" stroke="#fff" stroke-width="2.6"/><path d="M186.4 363H191.2M197.7 363H199.7M206.2 363H223.2M229.7 363H231.7M238.2 363H255.2M261.7 363H263.7M270.2 363H287.2M293.7 363H295.7M302.2 363H319.2M325.7 363H327.7M334.2 363H351.2M357.7 363H359.7M366.2 363H383.2M389.7 363H391.7M398.2 363H403" stroke="#c60000" stroke-width="2.1"/><path d="M294.7 311.2V323.5M294.7 330V332M294.7 338.5V355.5M294.7 362V364M294.7 370.5V387.5M294.7 394V396M294.7 402.5V414.4" stroke="#c60000" stroke-width="2.1"/><circle cx="469" cy="363" r="38.3" fill="none" stroke="#fff" stroke-width="2.6"/><path d="M417 363H432M438.5 363H440.5M447 363H464M470.5 363H472.5M479 363H496M502.5 363H504.5M511 363H526" stroke="#c60000" stroke-width="2.1"/><path d="M469 311.2V323.5M469 330V332M469 338.5V355.5M469 362V364M469 370.5V387.5M469 394V396M469 402.5V414.4" stroke="#c60000" stroke-width="2.1"/><circle cx="576.7" cy="363" r="17.9" fill="none" stroke="#fff" stroke-width="2.6"/><path d="M545.3 363H552.65M559.4 363H561.4M568.15 363H585.15M591.9 363H593.9M600.65 363H608" stroke="#c60000" stroke-width="2.1"/><path d="M576.7 331.7V339.05M576.7 345.8V347.8M576.7 354.55V371.55M576.7 378.3V380.3M576.7 387.05V393.9" stroke="#c60000" stroke-width="2.1"/><path d="M250.2 472.4H256.4M259.1 472.4H260.7M263.4 472.4H272.4M275.1 472.4H276.7M279.4 472.4H288.4M291.1 472.4H292.7M295.4 472.4H304.4M307.1 472.4H308.7M311.4 472.4H320.4M323.1 472.4H324.7M327.4 472.4H336.4M339.1 472.4H340.7M343.4 472.4H352.4M355.1 472.4H356.7M359.4 472.4H368.4M371.1 472.4H372.7M375.4 472.4H384.4M387.1 472.4H388.7M391.4 472.4H400.4M403.1 472.4H404.7M407.4 472.4H416.4M419.1 472.4H420.7M423.4 472.4H432.4M435.1 472.4H436.7M439.4 472.4H448.4M451.1 472.4H452.7M455.4 472.4H464.4M467.1 472.4H468.7M471.4 472.4H480.4M483.1 472.4H484.7M487.4 472.4H493.5" stroke="#aaaaaa" stroke-width="1.6"/><path d="M250.2 580.8H256.4M259.1 580.8H260.7M263.4 580.8H272.4M275.1 580.8H276.7M279.4 580.8H288.4M291.1 580.8H292.7M295.4 580.8H304.4M307.1 580.8H308.7M311.4 580.8H320.4M323.1 580.8H324.7M327.4 580.8H336.4M339.1 580.8H340.7M343.4 580.8H352.4M355.1 580.8H356.7M359.4 580.8H368.4M371.1 580.8H372.7M375.4 580.8H384.4M387.1 580.8H388.7M391.4 580.8H400.4M403.1 580.8H404.7M407.4 580.8H416.4M419.1 580.8H420.7M423.4 580.8H432.4M435.1 580.8H436.7M439.4 580.8H448.4M451.1 580.8H452.7M455.4 580.8H464.4M467.1 580.8H468.7M471.4 580.8H480.4M483.1 580.8H484.7M487.4 580.8H493.5" stroke="#aaaaaa" stroke-width="1.6"/><path d="M493.5 472.4 A54.2 54.2 0 0 1 493.5 580.8 M250.2 580.8 A54.2 54.2 0 0 1 250.2 472.4" fill="none" stroke="#aaaaaa" stroke-width="1.6" stroke-dasharray="9 2.7 1.6 2.7" stroke-dashoffset="2"/><path d="M288.5 494.5 H455.8 V543.8 H439.1 L425.8 559.4 H317.5 L304.6 543.8 H288.5 Z" fill="none" stroke="#fff" stroke-width="2.6" stroke-linejoin="miter"/><circle cx="234.1" cy="527" r="16" fill="none" stroke="#fff" stroke-width="2.6"/><circle cx="509.2" cy="527" r="16" fill="none" stroke="#fff" stroke-width="2.6"/><path d="M175.7 526.8H188M194.5 526.8H196.5M203 526.8H220M226.5 526.8H228.5M235 526.8H252M258.5 526.8H260.5M267 526.8H284M290.5 526.8H292.5M299 526.8H316M322.5 526.8H324.5M331 526.8H348M354.5 526.8H356.5M363 526.8H380M386.5 526.8H388.5M395 526.8H412M418.5 526.8H420.5M427 526.8H444M450.5 526.8H452.5M459 526.8H476M482.5 526.8H484.5M491 526.8H508M514.5 526.8H516.5M523 526.8H540M546.5 526.8H548.5M555 526.8H567" stroke="#c60000" stroke-width="2.1"/><path d="M371.7 454.7V471.25M371.7 477.75V479.75M371.7 486.25V503.25M371.7 509.75V511.75M371.7 518.25V535.25M371.7 541.75V543.75M371.7 550.25V567.25M371.7 573.75V575.75M371.7 582.25V598.8" stroke="#c60000" stroke-width="2.1"/><rect x="859" y="465.5" width="158.4" height="112.5" rx="15" fill="none" stroke="#fff" stroke-width="2.6"/><path d="M845.3 521.7H850.5M857 521.7H859M865.5 521.7H882.5M889 521.7H891M897.5 521.7H914.5M921 521.7H923M929.5 521.7H946.5M953 521.7H955M961.5 521.7H978.5M985 521.7H987M993.5 521.7H1010.5M1017 521.7H1019M1025.5 521.7H1031" stroke="#c60000" stroke-width="2.1"/><path d="M937.9 445V446.2M937.9 452.7V454.7M937.9 461.2V478.2M937.9 484.7V486.7M937.9 493.2V510.2M937.9 516.7V518.7M937.9 525.2V542.2M937.9 548.7V550.7M937.9 557.2V574.2M937.9 580.7V582.7M937.9 589.2V591.2" stroke="#c60000" stroke-width="2.1"/><g fill="none" stroke="#fff" stroke-width="2.5"><circle cx="684.33" cy="393.55" r="6.7"/><circle cx="715.08" cy="393.55" r="6.7"/><circle cx="745.83" cy="393.55" r="6.7"/><circle cx="776.58" cy="393.55" r="6.7"/><circle cx="807.33" cy="393.55" r="6.7"/><circle cx="838.08" cy="393.55" r="6.7"/><circle cx="868.83" cy="393.55" r="6.7"/><circle cx="899.58" cy="393.55" r="6.7"/><circle cx="930.33" cy="393.55" r="6.7"/><circle cx="961.08" cy="393.55" r="6.7"/><circle cx="991.83" cy="393.55" r="6.7"/><circle cx="668.95" cy="414.05" r="6.7"/><circle cx="699.7" cy="414.05" r="6.7"/><circle cx="730.45" cy="414.05" r="6.7"/><circle cx="761.2" cy="414.05" r="6.7"/><circle cx="791.95" cy="414.05" r="6.7"/><circle cx="822.7" cy="414.05" r="6.7"/><circle cx="853.45" cy="414.05" r="6.7"/><circle cx="884.2" cy="414.05" r="6.7"/><circle cx="914.95" cy="414.05" r="6.7"/><circle cx="945.7" cy="414.05" r="6.7"/><circle cx="976.45" cy="414.05" r="6.7"/><circle cx="1007.2" cy="414.05" r="6.7"/><circle cx="684.33" cy="434.55" r="6.7"/><circle cx="715.08" cy="434.55" r="6.7"/><circle cx="745.83" cy="434.55" r="6.7"/><circle cx="776.58" cy="434.55" r="6.7"/><circle cx="807.33" cy="434.55" r="6.7"/><circle cx="838.08" cy="434.55" r="6.7"/><circle cx="868.83" cy="434.55" r="6.7"/><circle cx="899.58" cy="434.55" r="6.7"/><circle cx="930.33" cy="434.55" r="6.7"/><circle cx="961.08" cy="434.55" r="6.7"/><circle cx="991.83" cy="434.55" r="6.7"/><circle cx="668.95" cy="455.05" r="6.7"/><circle cx="699.7" cy="455.05" r="6.7"/><circle cx="730.45" cy="455.05" r="6.7"/><circle cx="761.2" cy="455.05" r="6.7"/><circle cx="791.95" cy="455.05" r="6.7"/><circle cx="822.7" cy="455.05" r="6.7"/><circle cx="684.33" cy="475.55" r="6.7"/><circle cx="715.08" cy="475.55" r="6.7"/><circle cx="745.83" cy="475.55" r="6.7"/><circle cx="776.58" cy="475.55" r="6.7"/><circle cx="807.33" cy="475.55" r="6.7"/><circle cx="668.95" cy="496.05" r="6.7"/><circle cx="699.7" cy="496.05" r="6.7"/><circle cx="730.45" cy="496.05" r="6.7"/><circle cx="761.2" cy="496.05" r="6.7"/><circle cx="791.95" cy="496.05" r="6.7"/><circle cx="822.7" cy="496.05" r="6.7"/><circle cx="684.33" cy="516.55" r="6.7"/><circle cx="715.08" cy="516.55" r="6.7"/><circle cx="745.83" cy="516.55" r="6.7"/><circle cx="776.58" cy="516.55" r="6.7"/><circle cx="807.33" cy="516.55" r="6.7"/><circle cx="668.95" cy="537.05" r="6.7"/><circle cx="699.7" cy="537.05" r="6.7"/><circle cx="730.45" cy="537.05" r="6.7"/><circle cx="761.2" cy="537.05" r="6.7"/><circle cx="791.95" cy="537.05" r="6.7"/><circle cx="822.7" cy="537.05" r="6.7"/><circle cx="684.33" cy="557.55" r="6.7"/><circle cx="715.08" cy="557.55" r="6.7"/><circle cx="745.83" cy="557.55" r="6.7"/><circle cx="776.58" cy="557.55" r="6.7"/><circle cx="807.33" cy="557.55" r="6.7"/><circle cx="668.95" cy="578.05" r="6.7"/><circle cx="699.7" cy="578.05" r="6.7"/><circle cx="730.45" cy="578.05" r="6.7"/><circle cx="761.2" cy="578.05" r="6.7"/><circle cx="791.95" cy="578.05" r="6.7"/><circle cx="822.7" cy="578.05" r="6.7"/></g><g fill="#0680b0" stroke="#c89080" stroke-width=".5" stroke-opacity=".8"><rect x="663.95" y="319.65" width="10" height="10"/><rect x="656.55" y="327.05" width="10" height="10"/><rect x="663.95" y="334.45" width="10" height="10"/><rect x="671.35" y="327.05" width="10" height="10"/><rect x="694.7" y="319.65" width="10" height="10"/><rect x="687.3" y="327.05" width="10" height="10"/><rect x="694.7" y="334.45" width="10" height="10"/><rect x="702.1" y="327.05" width="10" height="10"/><rect x="725.45" y="319.65" width="10" height="10"/><rect x="718.05" y="327.05" width="10" height="10"/><rect x="725.45" y="334.45" width="10" height="10"/><rect x="732.85" y="327.05" width="10" height="10"/><rect x="756.2" y="319.65" width="10" height="10"/><rect x="748.8" y="327.05" width="10" height="10"/><rect x="756.2" y="334.45" width="10" height="10"/><rect x="763.6" y="327.05" width="10" height="10"/><rect x="786.95" y="319.65" width="10" height="10"/><rect x="779.55" y="327.05" width="10" height="10"/><rect x="786.95" y="334.45" width="10" height="10"/><rect x="794.35" y="327.05" width="10" height="10"/><rect x="817.7" y="319.65" width="10" height="10"/><rect x="810.3" y="327.05" width="10" height="10"/><rect x="817.7" y="334.45" width="10" height="10"/><rect x="825.1" y="327.05" width="10" height="10"/><rect x="848.45" y="319.65" width="10" height="10"/><rect x="841.05" y="327.05" width="10" height="10"/><rect x="848.45" y="334.45" width="10" height="10"/><rect x="855.85" y="327.05" width="10" height="10"/><rect x="879.2" y="319.65" width="10" height="10"/><rect x="871.8" y="327.05" width="10" height="10"/><rect x="879.2" y="334.45" width="10" height="10"/><rect x="886.6" y="327.05" width="10" height="10"/><rect x="909.95" y="319.65" width="10" height="10"/><rect x="902.55" y="327.05" width="10" height="10"/><rect x="909.95" y="334.45" width="10" height="10"/><rect x="917.35" y="327.05" width="10" height="10"/><rect x="940.7" y="319.65" width="10" height="10"/><rect x="933.3" y="327.05" width="10" height="10"/><rect x="940.7" y="334.45" width="10" height="10"/><rect x="948.1" y="327.05" width="10" height="10"/><rect x="971.45" y="319.65" width="10" height="10"/><rect x="964.05" y="327.05" width="10" height="10"/><rect x="971.45" y="334.45" width="10" height="10"/><rect x="978.85" y="327.05" width="10" height="10"/><rect x="1002.2" y="319.65" width="10" height="10"/><rect x="994.8" y="327.05" width="10" height="10"/><rect x="1002.2" y="334.45" width="10" height="10"/><rect x="1009.6" y="327.05" width="10" height="10"/><rect x="679.33" y="340.15" width="10" height="10"/><rect x="671.93" y="347.55" width="10" height="10"/><rect x="679.33" y="354.95" width="10" height="10"/><rect x="686.73" y="347.55" width="10" height="10"/><rect x="710.08" y="340.15" width="10" height="10"/><rect x="702.68" y="347.55" width="10" height="10"/><rect x="710.08" y="354.95" width="10" height="10"/><rect x="717.48" y="347.55" width="10" height="10"/><rect x="740.83" y="340.15" width="10" height="10"/><rect x="733.43" y="347.55" width="10" height="10"/><rect x="740.83" y="354.95" width="10" height="10"/><rect x="748.23" y="347.55" width="10" height="10"/><rect x="771.58" y="340.15" width="10" height="10"/><rect x="764.18" y="347.55" width="10" height="10"/><rect x="771.58" y="354.95" width="10" height="10"/><rect x="778.98" y="347.55" width="10" height="10"/><rect x="802.33" y="340.15" width="10" height="10"/><rect x="794.93" y="347.55" width="10" height="10"/><rect x="802.33" y="354.95" width="10" height="10"/><rect x="809.73" y="347.55" width="10" height="10"/><rect x="833.08" y="340.15" width="10" height="10"/><rect x="825.68" y="347.55" width="10" height="10"/><rect x="833.08" y="354.95" width="10" height="10"/><rect x="840.48" y="347.55" width="10" height="10"/><rect x="863.83" y="340.15" width="10" height="10"/><rect x="856.43" y="347.55" width="10" height="10"/><rect x="863.83" y="354.95" width="10" height="10"/><rect x="871.23" y="347.55" width="10" height="10"/><rect x="894.58" y="340.15" width="10" height="10"/><rect x="887.18" y="347.55" width="10" height="10"/><rect x="894.58" y="354.95" width="10" height="10"/><rect x="901.98" y="347.55" width="10" height="10"/><rect x="925.33" y="340.15" width="10" height="10"/><rect x="917.93" y="347.55" width="10" height="10"/><rect x="925.33" y="354.95" width="10" height="10"/><rect x="932.73" y="347.55" width="10" height="10"/><rect x="956.08" y="340.15" width="10" height="10"/><rect x="948.68" y="347.55" width="10" height="10"/><rect x="956.08" y="354.95" width="10" height="10"/><rect x="963.48" y="347.55" width="10" height="10"/><rect x="986.83" y="340.15" width="10" height="10"/><rect x="979.43" y="347.55" width="10" height="10"/><rect x="986.83" y="354.95" width="10" height="10"/><rect x="994.23" y="347.55" width="10" height="10"/><rect x="663.95" y="360.65" width="10" height="10"/><rect x="656.55" y="368.05" width="10" height="10"/><rect x="663.95" y="375.45" width="10" height="10"/><rect x="671.35" y="368.05" width="10" height="10"/><rect x="694.7" y="360.65" width="10" height="10"/><rect x="687.3" y="368.05" width="10" height="10"/><rect x="694.7" y="375.45" width="10" height="10"/><rect x="702.1" y="368.05" width="10" height="10"/><rect x="725.45" y="360.65" width="10" height="10"/><rect x="718.05" y="368.05" width="10" height="10"/><rect x="725.45" y="375.45" width="10" height="10"/><rect x="732.85" y="368.05" width="10" height="10"/><rect x="756.2" y="360.65" width="10" height="10"/><rect x="748.8" y="368.05" width="10" height="10"/><rect x="756.2" y="375.45" width="10" height="10"/><rect x="763.6" y="368.05" width="10" height="10"/><rect x="786.95" y="360.65" width="10" height="10"/><rect x="779.55" y="368.05" width="10" height="10"/><rect x="786.95" y="375.45" width="10" height="10"/><rect x="794.35" y="368.05" width="10" height="10"/><rect x="817.7" y="360.65" width="10" height="10"/><rect x="810.3" y="368.05" width="10" height="10"/><rect x="817.7" y="375.45" width="10" height="10"/><rect x="825.1" y="368.05" width="10" height="10"/><rect x="848.45" y="360.65" width="10" height="10"/><rect x="841.05" y="368.05" width="10" height="10"/><rect x="848.45" y="375.45" width="10" height="10"/><rect x="855.85" y="368.05" width="10" height="10"/><rect x="879.2" y="360.65" width="10" height="10"/><rect x="871.8" y="368.05" width="10" height="10"/><rect x="879.2" y="375.45" width="10" height="10"/><rect x="886.6" y="368.05" width="10" height="10"/><rect x="909.95" y="360.65" width="10" height="10"/><rect x="902.55" y="368.05" width="10" height="10"/><rect x="909.95" y="375.45" width="10" height="10"/><rect x="917.35" y="368.05" width="10" height="10"/><rect x="940.7" y="360.65" width="10" height="10"/><rect x="933.3" y="368.05" width="10" height="10"/><rect x="940.7" y="375.45" width="10" height="10"/><rect x="948.1" y="368.05" width="10" height="10"/><rect x="971.45" y="360.65" width="10" height="10"/><rect x="964.05" y="368.05" width="10" height="10"/><rect x="971.45" y="375.45" width="10" height="10"/><rect x="978.85" y="368.05" width="10" height="10"/><rect x="1002.2" y="360.65" width="10" height="10"/><rect x="994.8" y="368.05" width="10" height="10"/><rect x="1002.2" y="375.45" width="10" height="10"/><rect x="1009.6" y="368.05" width="10" height="10"/></g><g fill="#0000b8"><rect x="666.7" y="329.8" width="4.5" height="4.5"/><rect x="697.45" y="329.8" width="4.5" height="4.5"/><rect x="728.2" y="329.8" width="4.5" height="4.5"/><rect x="758.95" y="329.8" width="4.5" height="4.5"/><rect x="789.7" y="329.8" width="4.5" height="4.5"/><rect x="820.45" y="329.8" width="4.5" height="4.5"/><rect x="851.2" y="329.8" width="4.5" height="4.5"/><rect x="881.95" y="329.8" width="4.5" height="4.5"/><rect x="912.7" y="329.8" width="4.5" height="4.5"/><rect x="943.45" y="329.8" width="4.5" height="4.5"/><rect x="974.2" y="329.8" width="4.5" height="4.5"/><rect x="1004.95" y="329.8" width="4.5" height="4.5"/><rect x="682.08" y="350.3" width="4.5" height="4.5"/><rect x="712.83" y="350.3" width="4.5" height="4.5"/><rect x="743.58" y="350.3" width="4.5" height="4.5"/><rect x="774.33" y="350.3" width="4.5" height="4.5"/><rect x="805.08" y="350.3" width="4.5" height="4.5"/><rect x="835.83" y="350.3" width="4.5" height="4.5"/><rect x="866.58" y="350.3" width="4.5" height="4.5"/><rect x="897.33" y="350.3" width="4.5" height="4.5"/><rect x="928.08" y="350.3" width="4.5" height="4.5"/><rect x="958.83" y="350.3" width="4.5" height="4.5"/><rect x="989.58" y="350.3" width="4.5" height="4.5"/><rect x="666.7" y="370.8" width="4.5" height="4.5"/><rect x="697.45" y="370.8" width="4.5" height="4.5"/><rect x="728.2" y="370.8" width="4.5" height="4.5"/><rect x="758.95" y="370.8" width="4.5" height="4.5"/><rect x="789.7" y="370.8" width="4.5" height="4.5"/><rect x="820.45" y="370.8" width="4.5" height="4.5"/><rect x="851.2" y="370.8" width="4.5" height="4.5"/><rect x="881.95" y="370.8" width="4.5" height="4.5"/><rect x="912.7" y="370.8" width="4.5" height="4.5"/><rect x="943.45" y="370.8" width="4.5" height="4.5"/><rect x="974.2" y="370.8" width="4.5" height="4.5"/><rect x="1004.95" y="370.8" width="4.5" height="4.5"/></g><g stroke="#d00000" stroke-width="1" fill="none"><circle cx="146.5" cy="629.2" r="5"/><path d="M126.5 629.2H166.5M146.5 609.5V649"/></g><g fill="none"><circle cx="1030" cy="390.6" r="34.5" stroke="#56687a" stroke-opacity=".75" stroke-width="7.5"/><circle cx="1030" cy="390.6" r="37.2" stroke="#a9bccd" stroke-opacity=".55" stroke-width="1.3"/><circle cx="1030" cy="390.6" r="34.5" stroke="#8a9db0" stroke-opacity=".5" stroke-width="1"/><circle cx="1030" cy="390.6" r="32" stroke="#7d90a3" stroke-opacity=".4" stroke-width="1"/></g><path transform="translate(1029.4 390)" d="M0 0 L0 23.7 L5.4 19 L10.7 28.5 L14.8 26.7 L9.8 16.8 L17.2 16.8 Z" fill="none" stroke="#fff" stroke-width="4.2" stroke-linejoin="round"/><path transform="translate(1029.4 390)" d="M0 0 L0 23.7 L5.4 19 L10.7 28.5 L14.8 26.7 L9.8 16.8 L17.2 16.8 Z" fill="#fff" stroke="#000" stroke-width="1.8" stroke-linejoin="round"/></g></svg>
<div class="a" style="left:1138px;top:155px;width:16px;height:577px;background:#f8f8f8;border-left:1px solid #e6e6e6"></div>
<div class="a" style="left:1143px;top:298.6px;width:7.5px;height:282.7px;border-radius:4px;background:#808080"></div>
<div class="a" style="left:95px;top:731.6px;width:1059px;height:16.4px;background:#f9f9f9"></div>
<div class="a" style="left:301px;top:737px;width:603.5px;height:8px;border-radius:4px;background:#808080"></div>
<div class="a" style="left:1098.5px;top:733.5px;width:55.5px;height:13.5px;background:#ebebeb"></div>
<span class="a" style="left:1100px;top:733.5px;width:53px;text-align:right;font-size:12.5px;color:#1a1a1a;white-space:nowrap">1 &lt; 10</span>
<div class="a" style="left:72px;top:748px;width:1082px;height:1.5px;background:#bdbdbd"></div>
<div class="a" style="left:72px;top:749.5px;width:1082px;height:21.5px;background:#fff;border-bottom:1px solid #b4b4b4;border-right:1px solid #c8c8c8"></div>
<span class="a" style="left:77px;top:750px;font-size:13px;color:#1515d0;font-style:italic;white-space:nowrap">Kommando: <span style="font-style:normal">new</span></span>
<div class="a" style="left:72px;top:771px;width:1082px;height:27px;background:#ebebeb"></div>
<span class="a" style="left:73px;top:778px;font-size:13px;color:#111;white-space:nowrap">Kommando:</span>
<div class="a" style="left:148px;top:776px;width:979px;height:18px;background:#fff"></div>
<div class="a" style="left:1127px;top:773px;width:26px;height:25px;background:linear-gradient(#f4f4f4,#e8e8e8);border:1px solid #a4a4a4"></div>
<svg style="left:1132px;top:779px" width="18" height="14"><rect x="1.5" y="1.5" width="13.5" height="9.5" fill="#f2f2f2" stroke="#333" stroke-width="1"/><rect x="1" y="1" width="14.5" height="3" fill="#111"/><rect x="12" y="2" width="1" height="1" fill="#ddd"/></svg>
<div class="a" style="left:1154px;top:107.5px;width:300px;height:691px;background:#fff;border-left:1px solid #c4c4c4"></div>
<div class="a" style="left:1155px;top:107.5px;width:299px;height:23px;background:linear-gradient(#eaeaea,#e2e2e2)"></div>
<svg style="left:1155px;top:108px" width="40" height="22"><circle cx="9" cy="10" r="7" fill="#6c6c6c"/><path d="M6 7 L12 13 M12 7 L6 13" stroke="#fff" stroke-width="1.8"/><circle cx="27" cy="10" r="7" fill="#6c6c6c"/><rect x="22.5" y="8.5" width="6" height="5" fill="none" stroke="#fff" stroke-width="1.1"/><path d="M25 8.5 V6 H31 V11 H28.5" fill="none" stroke="#fff" stroke-width="1.1"/></svg>
<span class="a" style="left:1296px;top:111.5px;font-size:11.8px;color:#222;white-space:nowrap">Layerliste</span>
<div class="a" style="left:1155px;top:130.4px;width:299px;height:26px;background:linear-gradient(#ececec,#f6f6f6 60%,#f2f2f2);border-top:1px solid #cfcfcf;border-bottom:2px solid #bcbcbc"></div>
<div class="a" style="left:1214.5px;top:131px;width:2px;height:24px;background:#c4c4c4"></div>
<div class="a" style="left:1274.5px;top:131px;width:2px;height:24px;background:#c4c4c4"></div>
<div class="a" style="left:1334.5px;top:131px;width:2px;height:24px;background:#c4c4c4"></div>
<div class="a" style="left:1394.5px;top:131px;width:2px;height:24px;background:#c4c4c4"></div>
<svg style="left:1176px;top:136.5px" width="18" height="14"><g transform="scale(1.0)"><path d="M1.2 7 C2.5 1.2 15 0.2 16.8 6.5 C15.6 12.6 3.8 13.2 1.2 7Z" fill="#000"/><path d="M3.6 7.4 C4.8 3.4 13.2 2.9 14.6 7 C13.2 11.4 5 11.7 3.6 7.4Z" fill="#fff"/><circle cx="9" cy="5.3" r="2.1" fill="#000"/></g></svg>
<svg style="left:1236px;top:136.5px" width="18" height="14"><g transform="scale(1.0)"><path d="M1.2 7 C2.5 1.2 15 0.2 16.8 6.5 C15.6 12.6 3.8 13.2 1.2 7Z" fill="#9a9a9a"/><path d="M3.6 7.4 C4.8 3.4 13.2 2.9 14.6 7 C13.2 11.4 5 11.7 3.6 7.4Z" fill="#fff"/><circle cx="9" cy="5.3" r="2.1" fill="#9a9a9a"/></g></svg>
<svg style="left:1294px;top:133px" width="22" height="20"><path d="M11 3 V17 M4 10 H18" stroke="#ee0000" stroke-width="3.2"/></svg>
<svg style="left:1354px;top:133px" width="22" height="20"><path d="M4 10 H18" stroke="#ee0000" stroke-width="2.4"/></svg>
<svg style="left:1416px;top:134px" width="18" height="18"><g transform="scale(1.0)"><path d="M1 16 L2.6 11.5 L12.8 1.3 C13.8 0.6 15.6 2 15.1 3.3 L4.8 13.6Z" fill="#f0a830" stroke="#8a5a10" stroke-width=".7"/><path d="M12.8 1.3 C13.8 0.6 15.6 2 15.1 3.3 L13.8 4.6 L11.4 2.6Z" fill="#e03030"/></g></svg>
<div class="a" style="left:1160.5px;top:162.7px;width:16.5px;height:9px;background:#000;border:1px solid #222"></div>
<span class="a" style="left:1183px;top:158.7px;font-size:13.3px;color:#1a1a1a;white-space:nowrap">0</span>
<svg style="left:1414px;top:160.2px" width="18" height="14"><g transform="scale(1.0)"><path d="M1.2 7 C2.5 1.2 15 0.2 16.8 6.5 C15.6 12.6 3.8 13.2 1.2 7Z" fill="#000"/><path d="M3.6 7.4 C4.8 3.4 13.2 2.9 14.6 7 C13.2 11.4 5 11.7 3.6 7.4Z" fill="#fff"/><circle cx="9" cy="5.3" r="2.1" fill="#000"/></g></svg>
<svg style="left:1438px;top:159.2px" width="14" height="16"><path d="M3.8 7 V5 C3.8 0.8 10.6 0.8 10.6 5 V7" fill="none" stroke="#bdbdbd" stroke-width="1.3"/><rect x="2.2" y="6.6" width="10" height="7.4" fill="#bdbdbd"/></svg>
<div class="a" style="left:1160.5px;top:182.7px;width:16.5px;height:9px;background:#a0a0a4;border:1px solid #222"></div>
<span class="a" style="left:1183px;top:178.7px;font-size:13.3px;color:#1a1a1a;white-space:nowrap">Rückseite</span>
<svg style="left:1414px;top:180.2px" width="18" height="14"><g transform="scale(1.0)"><path d="M1.2 7 C2.5 1.2 15 0.2 16.8 6.5 C15.6 12.6 3.8 13.2 1.2 7Z" fill="#000"/><path d="M3.6 7.4 C4.8 3.4 13.2 2.9 14.6 7 C13.2 11.4 5 11.7 3.6 7.4Z" fill="#fff"/><circle cx="9" cy="5.3" r="2.1" fill="#000"/></g></svg>
<svg style="left:1438px;top:179.2px" width="14" height="16"><path d="M3.8 7 V5 C3.8 0.8 10.6 0.8 10.6 5 V7" fill="none" stroke="#bdbdbd" stroke-width="1.3"/><rect x="2.2" y="6.6" width="10" height="7.4" fill="#bdbdbd"/></svg>
<svg style="left:1393.5px;top:179.2px" width="18" height="18"><g transform="scale(0.92)"><path d="M1 16 L2.6 11.5 L12.8 1.3 C13.8 0.6 15.6 2 15.1 3.3 L4.8 13.6Z" fill="#f0a830" stroke="#8a5a10" stroke-width=".7"/><path d="M12.8 1.3 C13.8 0.6 15.6 2 15.1 3.3 L13.8 4.6 L11.4 2.6Z" fill="#e03030"/></g></svg>
<div class="a" style="left:1160.5px;top:202.7px;width:16.5px;height:9px;background:#000;border:1px solid #222"></div>
<span class="a" style="left:1183px;top:198.7px;font-size:13.3px;color:#1a1a1a;white-space:nowrap">Ventilation</span>
<svg style="left:1414px;top:200.2px" width="18" height="14"><g transform="scale(1.0)"><path d="M1.2 7 C2.5 1.2 15 0.2 16.8 6.5 C15.6 12.6 3.8 13.2 1.2 7Z" fill="#000"/><path d="M3.6 7.4 C4.8 3.4 13.2 2.9 14.6 7 C13.2 11.4 5 11.7 3.6 7.4Z" fill="#fff"/><circle cx="9" cy="5.3" r="2.1" fill="#000"/></g></svg>
<svg style="left:1438px;top:199.2px" width="14" height="16"><path d="M3.8 7 V5 C3.8 0.8 10.6 0.8 10.6 5 V7" fill="none" stroke="#bdbdbd" stroke-width="1.3"/><rect x="2.2" y="6.6" width="10" height="7.4" fill="#bdbdbd"/></svg>
<div class="a" style="left:1160.5px;top:222.7px;width:16.5px;height:9px;background:#f00;border:1px solid #222"></div>
<span class="a" style="left:1183px;top:218.7px;font-size:13.3px;color:#1a1a1a;white-space:nowrap">Zentrum</span>
<svg style="left:1414px;top:220.2px" width="18" height="14"><g transform="scale(1.0)"><path d="M1.2 7 C2.5 1.2 15 0.2 16.8 6.5 C15.6 12.6 3.8 13.2 1.2 7Z" fill="#000"/><path d="M3.6 7.4 C4.8 3.4 13.2 2.9 14.6 7 C13.2 11.4 5 11.7 3.6 7.4Z" fill="#fff"/><circle cx="9" cy="5.3" r="2.1" fill="#000"/></g></svg>
<svg style="left:1438px;top:219.2px" width="14" height="16"><path d="M3.8 7 V5 C3.8 0.8 10.6 0.8 10.6 5 V7" fill="none" stroke="#bdbdbd" stroke-width="1.3"/><rect x="2.2" y="6.6" width="10" height="7.4" fill="#bdbdbd"/></svg>
<div class="a" style="left:1454px;top:107.5px;width:46px;height:691px;background:linear-gradient(90deg,#f0f0f0,#e4e4e4 50%,#c6c6c6)"></div>
<svg style="left:0;top:0" width="1" height="1"><g fill="#9c9c9c"><rect x="1462" y="116" width="2" height="2"/><rect x="1468" y="116" width="2" height="2"/><rect x="1474" y="116" width="2" height="2"/><rect x="1480" y="116" width="2" height="2"/><rect x="1486" y="116" width="2" height="2"/><rect x="1456" y="259" width="1.5" height="1.5"/><rect x="1456" y="409" width="1.5" height="1.5"/><rect x="1459.6" y="259" width="1.5" height="1.5"/><rect x="1459.6" y="409" width="1.5" height="1.5"/><rect x="1463.2" y="259" width="1.5" height="1.5"/><rect x="1463.2" y="409" width="1.5" height="1.5"/><rect x="1466.8" y="259" width="1.5" height="1.5"/><rect x="1466.8" y="409" width="1.5" height="1.5"/><rect x="1470.4" y="259" width="1.5" height="1.5"/><rect x="1470.4" y="409" width="1.5" height="1.5"/><rect x="1474" y="259" width="1.5" height="1.5"/><rect x="1474" y="409" width="1.5" height="1.5"/><rect x="1477.6" y="259" width="1.5" height="1.5"/><rect x="1477.6" y="409" width="1.5" height="1.5"/><rect x="1481.2" y="259" width="1.5" height="1.5"/><rect x="1481.2" y="409" width="1.5" height="1.5"/><rect x="1484.8" y="259" width="1.5" height="1.5"/><rect x="1484.8" y="409" width="1.5" height="1.5"/><rect x="1488.4" y="259" width="1.5" height="1.5"/><rect x="1488.4" y="409" width="1.5" height="1.5"/><rect x="1492" y="259" width="1.5" height="1.5"/><rect x="1492" y="409" width="1.5" height="1.5"/><rect x="1495.6" y="259" width="1.5" height="1.5"/><rect x="1495.6" y="409" width="1.5" height="1.5"/></g></svg>
<div class="a" style="left:1456.5px;top:120.5px;width:41.5px;height:41.7px;border-radius:6px;background:#b5b5b5"></div>
<div class="a" style="left:1456.5px;top:418px;width:41.5px;height:40.5px;border-radius:6px;background:#b5b5b5"></div>
<svg style="left:1462px;top:126.5px" width="30" height="30"><rect x="1.5" y="1.5" width="27" height="27" fill="#fff" stroke="#222" stroke-width="1"/><rect x="1" y="1" width="28" height="4" fill="#000"/><rect x="2" y="2" width="3" height="3" fill="#fff"/><path d="M8 21 L8 12 L12 10 L12 19Z" fill="#9a9a9a" stroke="#555" stroke-width=".6"/><path d="M11 20 L11 11 L22 7 L22 16Z" fill="#f4f4f4" stroke="#666" stroke-width=".8"/><path d="M15 16 L18 10 L19 15Z" fill="none" stroke="#e33" stroke-width=".9"/></svg>
<svg style="left:1462px;top:173.5px" width="30" height="30"><rect x="1.5" y="1.5" width="27" height="27" fill="#fff" stroke="#222" stroke-width="1"/><rect x="1" y="1" width="28" height="4" fill="#000"/><rect x="2" y="2" width="3" height="3" fill="#fff"/><rect x="5" y="11" width="13" height="9" fill="#fbefc4" stroke="#555" stroke-width=".8"/><circle cx="18" cy="19" r="5" fill="#fbefc4" stroke="#555" stroke-width=".8" fill-opacity=".85"/></svg>
<svg style="left:1462px;top:220px" width="30" height="30"><rect x="1.5" y="1.5" width="27" height="27" fill="#fff" stroke="#222" stroke-width="1"/><rect x="1" y="1" width="28" height="4" fill="#000"/><rect x="2" y="2" width="3" height="3" fill="#fff"/><rect x="5" y="11" width="19" height="14" rx="2" fill="#f6f6f6" stroke="#a8c0e0" stroke-width="1"/></svg>
<svg style="left:1462px;top:275px" width="30" height="30"><rect x="1.5" y="1.5" width="27" height="27" fill="#fff" stroke="#222" stroke-width="1"/><rect x="1" y="1" width="28" height="4" fill="#000"/><rect x="2" y="2" width="3" height="3" fill="#fff"/><path d="M5 10h4v3h-4zM5 15h4v3h-4zM5 20h4v3h-4z" fill="#111"/><path d="M11.5 10.5h13v2.5h-13zM11.5 15.5h13v2.5h-13zM11.5 20.5h13v2.5h-13z" fill="#fff" stroke="#333" stroke-width=".8"/></svg>
<svg style="left:1462px;top:322px" width="30" height="30"><rect x="1.5" y="1.5" width="27" height="27" fill="#fff" stroke="#222" stroke-width="1"/><rect x="1" y="1" width="28" height="4" fill="#000"/><rect x="2" y="2" width="3" height="3" fill="#fff"/><ellipse cx="15" cy="11.5" rx="8" ry="1.8" fill="#bbb" stroke="#555" stroke-width=".7"/><path d="M7 11.5 C8 16 13 17 13.5 18.5 V24 L16.5 25.5 V18.5 C17 17 22 16 23 11.5" fill="#999" stroke="#555" stroke-width=".7"/></svg>
<svg style="left:1462px;top:368px" width="30" height="30"><rect x="1.5" y="1.5" width="27" height="27" fill="#fff" stroke="#222" stroke-width="1"/><rect x="1" y="1" width="28" height="4" fill="#000"/><rect x="2" y="2" width="3" height="3" fill="#fff"/><path d="M6 9 V25 M6 17 L13 11 V23Z" fill="none" stroke="#777" stroke-width=".9"/><rect x="13" y="13" width="10" height="8" fill="#888" stroke="#555" stroke-width=".7"/><circle cx="8" cy="17" r="1" fill="#d33"/></svg>
<svg style="left:1462px;top:424px" width="30" height="30"><rect x="1.5" y="1.5" width="27" height="27" fill="#fff" stroke="#222" stroke-width="1"/><rect x="1" y="1" width="28" height="4" fill="#000"/><rect x="2" y="2" width="3" height="3" fill="#fff"/><path d="M4 10h9M4 12.5h9M4 15h12M4 17.5h11M4 20h10" stroke="#888" stroke-width=".7"/><rect x="2" y="23" width="26" height="4" fill="#fff" stroke="#555" stroke-width=".6"/><path d="M5 25h2M12 25h12" stroke="#444" stroke-width=".8"/></svg>
<svg style="left:1462px;top:470.5px" width="30" height="30"><rect x="1.5" y="1.5" width="27" height="27" fill="#fff" stroke="#222" stroke-width="1"/><rect x="1" y="1" width="28" height="4" fill="#000"/><rect x="2" y="2" width="3" height="3" fill="#fff"/><rect x="7.5" y="9.5" width="15" height="17" fill="#cf9848" stroke="#8a6010" stroke-width=".8"/><rect x="9.5" y="11.5" width="11" height="13" fill="#f4f4f4"/><path d="M11 15h8M11 17.5h8M11 20h6" stroke="#bbb" stroke-width=".8"/><rect x="12" y="8" width="6" height="3" fill="#8a8a80"/></svg>
<div class="a" style="left:0;top:798px;width:1500px;height:46px;background:#dcdcdc;border-top:1px solid #c8c8c8"></div>
<span class="a st" style="left:2px;top:805.5px">86.2195,23.2683</span>
<span class="a st" style="left:2px;top:827px">@86.2195,23.2683</span>
<div class="a" style="left:253px;top:802px;width:1px;height:40px;background:#8a8a8a"></div><div class="a" style="left:254px;top:802px;width:1px;height:40px;background:#fafafa"></div>
<span class="a st" style="left:256px;top:805.5px">89.3041&lt;15.10°</span>
<span class="a st" style="left:256px;top:827px">@89.3041&lt;15.10°</span>
<div class="a" style="left:506px;top:819px;width:6px;height:6px;border-radius:3px;background:#c6c6c6"></div>
<div class="a" style="left:500px;top:811.2px;width:200px;font-size:9.1px;letter-spacing:.52px;line-height:11px;color:#1a1a1a;text-align:right;white-space:nowrap">Element oder Bereich selektieren<br>Element oder Referenzpunkt verschieben</div>
<svg style="left:716px;top:805px" width="22" height="32"><rect x="2" y="1" width="17" height="29" rx="8.5" fill="#fff" stroke="#333" stroke-width="1"/><path d="M2 13.5 C7 11 14 11 19 13.5" fill="none" stroke="#333" stroke-width="1"/><rect x="8.8" y="3.5" width="3.4" height="7" rx="1.7" fill="none" stroke="#333" stroke-width=".9"/><path d="M10.5 1 V13" stroke="#333" stroke-width=".5"/></svg>
<div class="a" style="left:939px;top:819px;width:6px;height:6px;border-radius:3px;background:#c6c6c6"></div>
<div class="a" style="left:949px;top:811.2px;font-size:9.1px;letter-spacing:.52px;line-height:11px;color:#1a1a1a;white-space:nowrap">Selektierte Objekte:<br>70 Kreise auf Layer "Ventilation".</div>
<div class="a" style="left:1268.5px;top:819px;width:6px;height:6px;border-radius:3px;background:#c6c6c6"></div>
</body></html>
